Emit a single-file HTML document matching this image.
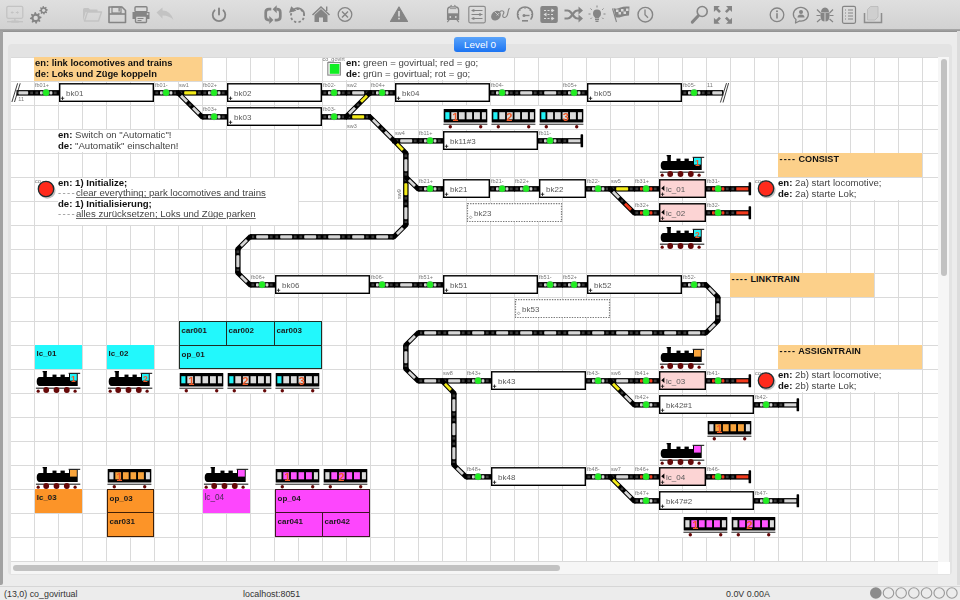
<!DOCTYPE html>
<html><head><meta charset="utf-8">
<style>
html,body{margin:0;padding:0;}
body{width:960px;height:600px;overflow:hidden;position:relative;background:#ececec;font-family:"Liberation Sans",sans-serif;}
.abs{position:absolute;}
#tb{left:0;top:0;width:960px;height:29px;background:linear-gradient(#dfdfdf,#d2d2d2);}
#tbl{left:0;top:29px;width:960px;height:3px;background:linear-gradient(#aaaaaa,#8f8f8f);}
#lbar{left:0;top:31px;width:3px;height:554px;background:#a2a2a2;border-bottom-right-radius:2px;}
#rbar{left:957px;top:31px;width:3px;height:554px;background:#dcdcdc;}
#panel{left:8px;top:44px;width:944px;height:531px;background:#e3e3e3;border-radius:4px;}
#grid{left:11px;top:57px;width:927px;height:505px;background-color:#fff;
  background-image:linear-gradient(90deg,#dadada 1px,transparent 1px),linear-gradient(#dadada 1px,transparent 1px);
  background-size:24px 24px;background-position:-1px 0px;}
#lvl{left:454px;top:37px;width:52px;height:15px;border-radius:3px;background:linear-gradient(#5aa4fb,#1c74f2);color:#fff;font-size:9.9px;line-height:15px;text-align:center;}
#vs{left:938px;top:57px;width:11px;height:505px;background:#f6f6f6;}
#vsth{left:941px;top:59px;width:6px;height:217px;border-radius:3px;background:#c2c2c2;}
#hs{left:11px;top:562px;width:927px;height:12px;background:#f6f6f6;}
#hsth{left:13px;top:565px;width:547px;height:6px;border-radius:3px;background:#c2c2c2;}
#corner{left:938px;top:562px;width:12px;height:12px;background:#fff;}
#sep{left:0;top:586px;width:960px;height:1px;background:#d6d6d6;}
.st{position:absolute;top:588px;font-size:8.9px;color:#333;line-height:12px;white-space:nowrap;}
svg{position:absolute;left:0;top:0;will-change:transform;}
.lb{font-size:5.5px;fill:#777;}
.bt{font-size:8px;fill:#5a5a5a;}
.num{font-size:8.5px;fill:#f05a28;font-weight:bold;}
.num2{font-size:11px;fill:#f05a28;font-weight:bold;}
.tx{position:absolute;font-size:9.6px;line-height:10.5px;color:#444;white-space:nowrap;}
.tx b{color:#111;}
.hd{color:#111;font-weight:bold;font-size:9.1px;}
.ob{position:absolute;background:#fcd08a;}
.dd{color:#888;letter-spacing:1.3px;}
u{text-decoration-color:#666;}
.dd2{letter-spacing:1.1px;}
.cb{position:absolute;box-sizing:border-box;font-size:8px;font-weight:bold;color:#1a1a1a;padding:2.5px 0 0 1.5px;line-height:12px;}
.cb.reg{font-weight:normal;color:#4a2a55;font-size:8.2px;}
</style></head><body>
<div id="tb" class="abs"></div>
<div id="tbl" class="abs"></div>
<div id="lbar" class="abs"></div>
<div id="rbar" class="abs"></div>
<div id="panel" class="abs"></div>
<div id="grid" class="abs"></div>
<div id="vs" class="abs"></div><div id="vsth" class="abs"></div>
<div id="hs" class="abs"></div><div id="hsth" class="abs"></div>
<div id="corner" class="abs"></div>
<div id="lvl" class="abs">Level 0</div>
<div id="sep" class="abs"></div>
<div class="st" style="left:4px">(13,0) co_govirtual</div>
<div class="st" style="left:243px">localhost:8051</div>
<div class="st" style="left:726px">0.0V 0.00A</div>
<svg width="960" height="600" viewBox="0 0 960 600">
<g fill="none" stroke="#c3c3c3" stroke-width="1.3"><rect x="6.8" y="6.3" width="16" height="12" rx="1.5"/></g>
<path d="M10.5,12.5 l2,-1.6 v1 h1.2 v1.2 h-1.2 v1 Z M19,12.5 l-2,-1.6 v1 h-1.2 v1.2 h1.2 v1 Z" fill="#c3c3c3"/>
<rect x="14.2" y="18.5" width="1.4" height="2.5" fill="#c3c3c3"/><rect x="7" y="21" width="16" height="1.4" fill="#c3c3c3"/><rect x="11" y="20.4" width="8" height="2.4" rx="1" fill="#c3c3c3"/>
<path d="M41.39,16.77 L41.50,17.90 L39.80,18.71 L39.56,19.50 L40.52,21.12 L39.80,22.00 L38.02,21.37 L37.30,21.76 L36.83,23.59 L35.70,23.70 L34.89,22.00 L34.10,21.76 L32.48,22.72 L31.60,22.00 L32.23,20.22 L31.84,19.50 L30.01,19.03 L29.90,17.90 L31.60,17.09 L31.84,16.30 L30.88,14.68 L31.60,13.80 L33.38,14.43 L34.10,14.04 L34.57,12.21 L35.70,12.10 L36.51,13.80 L37.30,14.04 L38.92,13.08 L39.80,13.80 L39.17,15.58 L39.56,16.30 Z" fill="#858585"/><circle cx="35.7" cy="17.9" r="2.2" fill="#dadada"/>
<path d="M47.82,9.46 L47.90,10.30 L46.64,10.90 L46.46,11.48 L47.18,12.69 L46.64,13.34 L45.32,12.87 L44.78,13.16 L44.44,14.52 L43.60,14.60 L43.00,13.34 L42.42,13.16 L41.21,13.88 L40.56,13.34 L41.03,12.02 L40.74,11.48 L39.38,11.14 L39.30,10.30 L40.56,9.70 L40.74,9.12 L40.02,7.91 L40.56,7.26 L41.88,7.73 L42.42,7.44 L42.76,6.08 L43.60,6.00 L44.20,7.26 L44.78,7.44 L45.99,6.72 L46.64,7.26 L46.17,8.58 L46.46,9.12 Z" fill="#858585"/><circle cx="43.6" cy="10.3" r="1.6" fill="#dadada"/>
<path d="M83,9.5 q0,-1.5 1.5,-1.5 h4 l1.5,1.5 h6.5 q1.2,0 1.2,1.2 v1.3 h-12 l-2.7,9 Z" fill="#c3c3c3"/>
<path d="M84.5,21 l3,-9 h14 l-3,9 Z" fill="none" stroke="#c3c3c3" stroke-width="1.4" stroke-linejoin="round"/>
<path d="M109,7 h13 l3.5,3.5 v12 h-16.5 Z" fill="none" stroke="#858585" stroke-width="1.6" stroke-linejoin="round"/>
<path d="M109,14 h16.5" stroke="#858585" stroke-width="1.6"/><rect x="112" y="7" width="9" height="6" fill="none" stroke="#858585" stroke-width="1.2"/><rect x="118.5" y="8" width="1.3" height="3.5" fill="#858585"/>
<rect x="135" y="6.8" width="12" height="5" rx="1" fill="none" stroke="#858585" stroke-width="1.4"/>
<path d="M132.5,12 h17 v7 h-2.7 v-3 h-11.6 v3 h-2.7 Z" fill="#858585"/>
<rect x="135.5" y="16" width="11" height="6.5" rx="1" fill="none" stroke="#858585" stroke-width="1.4"/>
<rect x="137.5" y="18" width="6" height="1" fill="#858585"/><rect x="137.5" y="20" width="4" height="1" fill="#858585"/><rect x="146.8" y="13.2" width="1.6" height="1.6" fill="#dadada"/>
<path d="M156.5,12.5 l6,-5 v3 q8,0 11,9.5 q-4,-4.5 -11,-4.5 v3.2 Z" fill="#c3c3c3"/>
<path d="M214.6,10.3 A6.3,6.3 0 1 0 223.4,10.3" fill="none" stroke="#858585" stroke-width="1.8" stroke-linecap="round"/>
<path d="M219,8.5 v6" stroke="#858585" stroke-width="1.9" stroke-linecap="round"/>
<path d="M271.3,9.2 h-2.3 q-3.3,0 -3.3,3.3 v4.3 q0,3.3 3.3,3.3 h0.6" fill="none" stroke="#858585" stroke-width="2.7"/>
<path d="M269.3,16 l4.1,4 l-4.1,4 Z" fill="#858585"/>
<path d="M274.7,20.1 h2.3 q3.3,0 3.3,-3.3 v-4.3 q0,-3.3 -3.3,-3.3 h-0.6" fill="none" stroke="#858585" stroke-width="2.7"/>
<path d="M276.7,5.2 l-4.1,4 l4.1,4 Z" fill="#858585"/>
<circle cx="297.5" cy="15.6" r="6.6" fill="none" stroke="#858585" stroke-width="1.8" stroke-dasharray="2.4 2.2" transform="rotate(20 297.5 15.6)"/>
<path d="M293.5,9.6 A6.6,6.6 0 0 1 304.1,15.6" fill="none" stroke="#858585" stroke-width="1.8"/>
<path d="M289,12.8 l2.2,-6.6 l5.2,4.6 Z" fill="#858585"/>
<path d="M312.5,15 l8.5,-8 l8.5,8" fill="none" stroke="#858585" stroke-width="1.6" stroke-linejoin="miter"/>
<path d="M314.5,15 l6.5,-6 l6.5,6 v7 h-4.5 v-4.5 h-4 v4.5 h-4.5 Z" fill="#858585"/>
<rect x="326" y="6.5" width="1.4" height="4.5" fill="#858585"/>
<circle cx="345" cy="14.5" r="6.8" fill="none" stroke="#858585" stroke-width="1.3"/>
<path d="M342,11.5 l6,6 M348,11.5 l-6,6" stroke="#858585" stroke-width="1.4"/>
<path d="M399,7 l8.5,14.5 h-17 Z" fill="#858585" stroke="#858585" stroke-width="1.2" stroke-linejoin="round"/>
<rect x="398.2" y="11" width="1.6" height="5.5" fill="#dcdcdc"/><rect x="398.2" y="17.8" width="1.6" height="1.6" fill="#dcdcdc"/>
<path d="M447.6,10 q0,-3 3,-3.2 h5 q3,0.2 3,3.2 v9.3 h-11 Z" fill="none" stroke="#858585" stroke-width="1.3"/>
<rect x="447.6" y="13.3" width="11" height="6" fill="#858585"/>
<circle cx="450.3" cy="17" r="0.9" fill="#d8d8d8"/><circle cx="455.8" cy="17" r="0.9" fill="#d8d8d8"/>
<path d="M449.5,19.3 l-2.2,2.8 M456.6,19.3 l2.2,2.8 M450.5,6.5 l1,-1.5 M455.5,6.5 l-1,-1.5" stroke="#858585" stroke-width="1.1"/>
<path d="M449.8,8.6 h6.5" stroke="#858585" stroke-width="0.8"/>
<rect x="468.8" y="6.3" width="16.5" height="16.5" rx="1.5" fill="none" stroke="#858585" stroke-width="1.2" opacity="0.9"/>
<path d="M471.5,10.5 h11 M471.5,14.5 h11 M471.5,18.5 h11" stroke="#858585" stroke-width="1.1"/>
<circle cx="473.5" cy="10.5" r="1.3" fill="#858585"/><circle cx="480" cy="14.5" r="1.3" fill="#858585"/><circle cx="473.5" cy="18.5" r="1.3" fill="#858585"/>
<ellipse cx="496" cy="15.6" rx="4.3" ry="5.4" transform="rotate(45 496 15.6)" fill="#858585"/>
<path d="M494.5,11.5 l4,4 M499.2,13 l-2.5,2.5" fill="none" stroke="#d8d8d8" stroke-width="0.8"/>
<path d="M499.5,12 C502.5,9.5 505,11.5 503.2,14.2 C501.5,17 504.8,19 506.8,16 C508.5,13.5 507.5,10 509.5,8.2" fill="none" stroke="#858585" stroke-width="1.1"/>
<path d="M519,19 A7.5,7.5 0 1 1 531,19" fill="none" stroke="#858585" stroke-width="1.6" stroke-linecap="round"/>
<path d="M523.5,15.5 h6" stroke="#858585" stroke-width="1.4"/><circle cx="524" cy="15.5" r="1.5" fill="#858585"/><rect x="522" y="20" width="6" height="1.6" fill="#858585"/>
<path d="M525,7.5 v1.5 M519.5,10 l1,1 M530.5,10 l-1,1 M517.5,14.5 h1.5 M531,14.5 h1.5" stroke="#858585" stroke-width="0.9"/>
<rect x="540.3" y="6" width="17.5" height="17" rx="2" fill="#858585"/>
<path d="M544,10.5 h10 M544,14.5 h10 M544,18.5 h10" stroke="#dcdcdc" stroke-width="1.2" stroke-dasharray="2 1.5"/>
<path d="M551.5,8.5 l3,2 l-3,2 Z M546.5,12.5 l-3,2 l3,2 Z M551.5,16.5 l3,2 l-3,2 Z" fill="#dcdcdc"/>
<path d="M564.5,10.5 h3 q2,0 3.5,2 l3,4 q1.5,2 3.5,2 h2" fill="none" stroke="#858585" stroke-width="2.2"/>
<path d="M564.5,18.5 h3 q2,0 3.5,-2 l3,-4 q1.5,-2 3.5,-2 h2" fill="none" stroke="#858585" stroke-width="2.2"/>
<path d="M578.5,6.5 l4.5,4 l-4.5,4 Z M578.5,14.5 l4.5,4 l-4.5,4 Z" fill="#858585"/>
<circle cx="597" cy="13.5" r="4" fill="#858585"/><path d="M594.5,15.5 h5 l-0.5,3 h-4 Z" fill="#858585"/><rect x="595" y="19" width="4" height="1.2" fill="#858585"/><rect x="595.5" y="20.8" width="3" height="1.2" fill="#858585"/>
<path d="M597,5.5 v2 M590.5,8.5 l1.3,1.3 M603.5,8.5 l-1.3,1.3 M588.5,14 h2 M603.5,14 h2 M590.5,19 l1.3,-1.3 M603.5,19 l-1.3,-1.3" stroke="#858585" stroke-width="1"/>
<path d="M612.5,8.5 l4,13.5" stroke="#858585" stroke-width="1.1"/>
<path d="M613.5,8 q3,1.5 7,-0.5 q3,-1.5 9,-1 l-0.5,9 q-5,0 -8,1.5 q-3,1 -5.5,0 Z" fill="#858585"/>
<path d="M616,9.5 h2.5 v2.5 h-2.5 Z M621,9 h2.5 v2.5 h-2.5 Z M626,8.5 h2.5 v2.5 h-2.5 Z M618.5,12 h2.5 v2.5 h-2.5 Z M623.5,11.5 h2.5 v2.5 h-2.5 Z" fill="#dadada"/>
<circle cx="645.3" cy="14.7" r="7.3" fill="none" stroke="#858585" stroke-width="1.4"/>
<path d="M645,9.5 v5.3 l3,3" fill="none" stroke="#858585" stroke-width="1.3"/>
<circle cx="702.2" cy="11.5" r="5" fill="none" stroke="#858585" stroke-width="1.6"/><path d="M698.3,15.8 l-6,6.3" stroke="#858585" stroke-width="3" stroke-linecap="round"/>
<path d="M713.9,6 h6 l-6,6 Z M732,6 h-6 l6,6 Z M713.9,23.8 h6 l-6,-6 Z M732,23.8 h-6 l6,-6 Z" fill="#858585"/>
<path d="M715,7.2 l5,5 M730.9,7.2 l-5,5 M715,22.6 l5,-5 M730.9,22.6 l-5,-5" stroke="#858585" stroke-width="2.6"/>
<circle cx="777" cy="14.8" r="6.8" fill="none" stroke="#858585" stroke-width="1.3"/><circle cx="777" cy="11.2" r="1" fill="#858585"/><rect x="776.2" y="13.2" width="1.6" height="5.3" fill="#858585"/>
<path d="M796,19.5 A7.5,6.8 0 1 1 799.5,21 l-4,2 Z" fill="none" stroke="#858585" stroke-width="1.3" stroke-linejoin="round"/>
<circle cx="801" cy="12" r="2" fill="#858585"/><path d="M797.5,17.5 q0,-3 3.5,-3 q3.5,0 3.5,3 Z" fill="#858585"/>
<path d="M820.5,13 h9 v3 q0,5.5 -4.5,5.5 q-4.5,0 -4.5,-5.5 Z" fill="#858585"/><path d="M821,12.5 q0,-4.5 4,-5 q4,0.5 4,5 Z" fill="#858585"/>
<path d="M825,13 v9" stroke="#dadada" stroke-width="0.9"/><path d="M817,9.5 l3.5,3.5 M833,9.5 l-3.5,3.5 M816.5,15.5 h4 M833.5,15.5 h-4 M817,22 l3.5,-3 M833,22 l-3.5,-3" stroke="#858585" stroke-width="1.2"/>
<rect x="842.5" y="6.3" width="13" height="17" rx="1.5" fill="none" stroke="#858585" stroke-width="1.2"/>
<path d="M845,10 h1 M848,10 h5 M845,13 h1 M848,13 h5 M845,16 h1 M848,16 h5 M845,19 h1 M848,19 h5" stroke="#858585" stroke-width="1.2"/>
<path d="M864.5,13 v9.5 h17 v-9.5" fill="none" stroke="#858585" stroke-width="1.5" opacity="0.9"/>
<path d="M867.5,20 v-10.5 l3,-3 h7.5 v10.5 l-3,3 Z" fill="#cfcfcf" stroke="#b8b8b8" stroke-width="0.8"/>
<rect x="16.5" y="90.1" width="17.5" height="5.5" fill="#000"/>
<rect x="18.4" y="91.3" width="9.8" height="3.1" rx="0.7" fill="#d6d6d6"/>
<rect x="30.2" y="91.55" width="2.8" height="2.6" fill="#3c3c3c"/>
<path d="M11.9,102 L17.6,83.3 M14.5,102 L20.2,83.3" stroke="#2a2a2a" stroke-width="0.9"/>
<text x="18.3" y="101" class="lb">11</text>
<rect x="34" y="90.1" width="25" height="5.5" fill="#000"/>
<rect x="35.4" y="91.55" width="2.8" height="2.6" fill="#3c3c3c"/>
<rect x="53.8" y="91.55" width="2.8" height="2.6" fill="#3c3c3c"/>
<rect x="40" y="91.15" width="2.8" height="3.4" rx="0.8" fill="#d6d6d6"/>
<rect x="49.6" y="91.15" width="2.8" height="3.4" rx="0.8" fill="#d6d6d6"/>
<circle cx="46.1" cy="92.65" r="3.35" fill="#20ee20" stroke="#7a5a9a" stroke-width="0.25"/>
<text x="35" y="86.9" class="lb">fb01+</text>
<rect x="59.7" y="83.8" width="93.6" height="17.5" fill="#fff" stroke="#000" stroke-width="1.4"/>
<text x="66" y="96" class="bt">bk01</text>
<path d="M62.5,96.5 v3.5 M60.75,98.25 h3.5" stroke="#111" stroke-width="0.8"/>
<rect x="154" y="90.1" width="25" height="5.5" fill="#000"/>
<rect x="155.4" y="91.55" width="2.8" height="2.6" fill="#3c3c3c"/>
<rect x="173.8" y="91.55" width="2.8" height="2.6" fill="#3c3c3c"/>
<rect x="160" y="91.15" width="2.8" height="3.4" rx="0.8" fill="#d6d6d6"/>
<rect x="169.6" y="91.15" width="2.8" height="3.4" rx="0.8" fill="#d6d6d6"/>
<circle cx="166.1" cy="92.65" r="3.35" fill="#20ee20" stroke="#7a5a9a" stroke-width="0.25"/>
<text x="155" y="86.9" class="lb">fb01-</text>
<rect x="178" y="90.1" width="25" height="5.5" fill="#000"/>
<rect x="179.4" y="91.55" width="2.8" height="2.6" fill="#3c3c3c"/>
<rect x="197.8" y="91.55" width="2.8" height="2.6" fill="#3c3c3c"/>
<rect x="184.2" y="91.3" width="12" height="3.1" rx="0.7" fill="#f4ec1a"/>
<text x="179" y="86.9" class="lb">sw1</text>
<path d="M176,92.85 L178,92.85 L202,116.85 L204,116.85" fill="none" stroke="#000" stroke-width="4.9" stroke-linejoin="miter" stroke-miterlimit="3"/>
<line x1="180.99" y1="95.84" x2="187.01" y2="101.86" stroke="#d6d6d6" stroke-width="2.8"/>
<line x1="189.08" y1="103.93" x2="190.92" y2="105.77" stroke="#3c3c3c" stroke-width="2.4"/>
<line x1="192.99" y1="107.84" x2="199.01" y2="113.86" stroke="#d6d6d6" stroke-width="2.8"/>
<rect x="202" y="90.1" width="25" height="5.5" fill="#000"/>
<rect x="203.4" y="91.55" width="2.8" height="2.6" fill="#3c3c3c"/>
<rect x="221.8" y="91.55" width="2.8" height="2.6" fill="#3c3c3c"/>
<rect x="208" y="91.15" width="2.8" height="3.4" rx="0.8" fill="#d6d6d6"/>
<rect x="217.6" y="91.15" width="2.8" height="3.4" rx="0.8" fill="#d6d6d6"/>
<circle cx="214.1" cy="92.65" r="3.35" fill="#20ee20" stroke="#7a5a9a" stroke-width="0.25"/>
<text x="203" y="86.9" class="lb">fb02+</text>
<rect x="227.7" y="83.8" width="93.6" height="17.5" fill="#fff" stroke="#000" stroke-width="1.4"/>
<text x="234" y="96" class="bt">bk02</text>
<path d="M230.5,96.5 v3.5 M228.75,98.25 h3.5" stroke="#111" stroke-width="0.8"/>
<rect x="322" y="90.1" width="25" height="5.5" fill="#000"/>
<rect x="323.4" y="91.55" width="2.8" height="2.6" fill="#3c3c3c"/>
<rect x="341.8" y="91.55" width="2.8" height="2.6" fill="#3c3c3c"/>
<rect x="328" y="91.15" width="2.8" height="3.4" rx="0.8" fill="#d6d6d6"/>
<rect x="337.6" y="91.15" width="2.8" height="3.4" rx="0.8" fill="#d6d6d6"/>
<circle cx="334.1" cy="92.65" r="3.35" fill="#20ee20" stroke="#7a5a9a" stroke-width="0.25"/>
<text x="323" y="86.9" class="lb">fb02-</text>
<rect x="346" y="90.1" width="25" height="5.5" fill="#000"/>
<rect x="347.4" y="91.55" width="2.8" height="2.6" fill="#3c3c3c"/>
<rect x="365.8" y="91.55" width="2.8" height="2.6" fill="#3c3c3c"/>
<rect x="352.2" y="91.3" width="12" height="3.1" rx="0.7" fill="#d6d6d6"/>
<text x="347" y="86.9" class="lb">sw2</text>
<rect x="370" y="90.1" width="25" height="5.5" fill="#000"/>
<rect x="371.4" y="91.55" width="2.8" height="2.6" fill="#3c3c3c"/>
<rect x="389.8" y="91.55" width="2.8" height="2.6" fill="#3c3c3c"/>
<rect x="376" y="91.15" width="2.8" height="3.4" rx="0.8" fill="#d6d6d6"/>
<rect x="385.6" y="91.15" width="2.8" height="3.4" rx="0.8" fill="#d6d6d6"/>
<circle cx="382.1" cy="92.65" r="3.35" fill="#20ee20" stroke="#7a5a9a" stroke-width="0.25"/>
<text x="371" y="86.9" class="lb">fb04+</text>
<rect x="395.7" y="83.8" width="93.6" height="17.5" fill="#fff" stroke="#000" stroke-width="1.4"/>
<text x="402" y="96" class="bt">bk04</text>
<path d="M398.5,96.5 v3.5 M396.75,98.25 h3.5" stroke="#111" stroke-width="0.8"/>
<rect x="490" y="90.1" width="25" height="5.5" fill="#000"/>
<rect x="491.4" y="91.55" width="2.8" height="2.6" fill="#3c3c3c"/>
<rect x="509.8" y="91.55" width="2.8" height="2.6" fill="#3c3c3c"/>
<rect x="496" y="91.15" width="2.8" height="3.4" rx="0.8" fill="#d6d6d6"/>
<rect x="505.6" y="91.15" width="2.8" height="3.4" rx="0.8" fill="#d6d6d6"/>
<circle cx="502.1" cy="92.65" r="3.35" fill="#20ee20" stroke="#7a5a9a" stroke-width="0.25"/>
<text x="491" y="86.9" class="lb">fb04-</text>
<rect x="514" y="90.1" width="25" height="5.5" fill="#000"/>
<rect x="515.4" y="91.55" width="2.8" height="2.6" fill="#3c3c3c"/>
<rect x="533.8" y="91.55" width="2.8" height="2.6" fill="#3c3c3c"/>
<rect x="520.2" y="91.3" width="12" height="3.1" rx="0.7" fill="#d6d6d6"/>
<rect x="538" y="90.1" width="25" height="5.5" fill="#000"/>
<rect x="539.4" y="91.55" width="2.8" height="2.6" fill="#3c3c3c"/>
<rect x="557.8" y="91.55" width="2.8" height="2.6" fill="#3c3c3c"/>
<rect x="544.2" y="91.3" width="12" height="3.1" rx="0.7" fill="#d6d6d6"/>
<rect x="562" y="90.1" width="25" height="5.5" fill="#000"/>
<rect x="563.4" y="91.55" width="2.8" height="2.6" fill="#3c3c3c"/>
<rect x="581.8" y="91.55" width="2.8" height="2.6" fill="#3c3c3c"/>
<rect x="568" y="91.15" width="2.8" height="3.4" rx="0.8" fill="#d6d6d6"/>
<rect x="577.6" y="91.15" width="2.8" height="3.4" rx="0.8" fill="#d6d6d6"/>
<circle cx="574.1" cy="92.65" r="3.35" fill="#20ee20" stroke="#7a5a9a" stroke-width="0.25"/>
<text x="563" y="86.9" class="lb">fb05+</text>
<rect x="587.7" y="83.8" width="93.6" height="17.5" fill="#fff" stroke="#000" stroke-width="1.4"/>
<text x="594" y="96" class="bt">bk05</text>
<path d="M590.5,96.5 v3.5 M588.75,98.25 h3.5" stroke="#111" stroke-width="0.8"/>
<rect x="682" y="90.1" width="25" height="5.5" fill="#000"/>
<rect x="683.4" y="91.55" width="2.8" height="2.6" fill="#3c3c3c"/>
<rect x="701.8" y="91.55" width="2.8" height="2.6" fill="#3c3c3c"/>
<rect x="688" y="91.15" width="2.8" height="3.4" rx="0.8" fill="#d6d6d6"/>
<rect x="697.6" y="91.15" width="2.8" height="3.4" rx="0.8" fill="#d6d6d6"/>
<circle cx="694.1" cy="92.65" r="3.35" fill="#20ee20" stroke="#7a5a9a" stroke-width="0.25"/>
<text x="683" y="86.9" class="lb">fb05-</text>
<rect x="706" y="90.1" width="17.3" height="5.5" fill="#000"/>
<rect x="707.3" y="91.55" width="2.8" height="2.6" fill="#3c3c3c"/>
<rect x="712.3" y="91.3" width="9.8" height="3.1" rx="0.7" fill="#d6d6d6"/>
<path d="M720.4,102.5 L726.5,83.1 M723,102.5 L728.6,83.1" stroke="#2a2a2a" stroke-width="0.9"/>
<text x="707" y="86.9" class="lb">11</text>
<rect x="202" y="114.1" width="25" height="5.5" fill="#000"/>
<rect x="203.4" y="115.55" width="2.8" height="2.6" fill="#3c3c3c"/>
<rect x="221.8" y="115.55" width="2.8" height="2.6" fill="#3c3c3c"/>
<rect x="208" y="115.15" width="2.8" height="3.4" rx="0.8" fill="#d6d6d6"/>
<rect x="217.6" y="115.15" width="2.8" height="3.4" rx="0.8" fill="#d6d6d6"/>
<circle cx="214.1" cy="116.65" r="3.35" fill="#20ee20" stroke="#7a5a9a" stroke-width="0.25"/>
<text x="203" y="110.9" class="lb">fb03+</text>
<rect x="227.7" y="107.8" width="93.6" height="17.5" fill="#fff" stroke="#000" stroke-width="1.4"/>
<text x="234" y="120" class="bt">bk03</text>
<path d="M230.5,120.5 v3.5 M228.75,122.25 h3.5" stroke="#111" stroke-width="0.8"/>
<rect x="322" y="114.1" width="25" height="5.5" fill="#000"/>
<rect x="323.4" y="115.55" width="2.8" height="2.6" fill="#3c3c3c"/>
<rect x="341.8" y="115.55" width="2.8" height="2.6" fill="#3c3c3c"/>
<rect x="328" y="115.15" width="2.8" height="3.4" rx="0.8" fill="#d6d6d6"/>
<rect x="337.6" y="115.15" width="2.8" height="3.4" rx="0.8" fill="#d6d6d6"/>
<circle cx="334.1" cy="116.65" r="3.35" fill="#20ee20" stroke="#7a5a9a" stroke-width="0.25"/>
<text x="323" y="110.9" class="lb">fb03-</text>
<rect x="346" y="114.1" width="25" height="5.5" fill="#000"/>
<rect x="347.4" y="115.55" width="2.8" height="2.6" fill="#3c3c3c"/>
<rect x="365.8" y="115.55" width="2.8" height="2.6" fill="#3c3c3c"/>
<rect x="352.2" y="115.3" width="12" height="3.1" rx="0.7" fill="#f4ec1a"/>
<text x="347" y="127.5" class="lb">sw3</text>
<path d="M372,92.85 L370,92.85 L346,116.85 L344,116.85" fill="none" stroke="#000" stroke-width="4.9" stroke-linejoin="miter" stroke-miterlimit="3"/>
<line x1="367.01" y1="95.84" x2="360.99" y2="101.86" stroke="#f4ec1a" stroke-width="2.8"/>
<line x1="358.92" y1="103.93" x2="357.08" y2="105.77" stroke="#3c3c3c" stroke-width="2.4"/>
<line x1="355.01" y1="107.84" x2="348.99" y2="113.86" stroke="#d6d6d6" stroke-width="2.8"/>
<rect x="442" y="106" width="47" height="23" fill="#fff"/>
<g transform="translate(443.7,109)"><rect x="0" y="0" width="43.6" height="13.6" rx="0.6" fill="#000"/><rect x="-0.3" y="14.7" width="44" height="1.1" fill="#3a3a3a"/><rect x="1.6" y="3.2" width="4.2" height="7.1" fill="#22f2f6"/><rect x="7.6" y="3.2" width="5.8" height="7.1" fill="#dcdcdc"/><rect x="15.2" y="3.2" width="5.8" height="7.1" fill="#dcdcdc"/><rect x="22.8" y="3.2" width="5.6" height="7.1" fill="#dcdcdc"/><rect x="30.3" y="3.2" width="5.9" height="7.1" fill="#dcdcdc"/><rect x="38.2" y="3.2" width="4" height="7.1" fill="#dcdcdc"/><circle cx="6.6" cy="17.8" r="1.7" fill="#650808"/><circle cx="37" cy="17.8" r="1.7" fill="#650808"/></g>
<text x="455.2" y="120.6" class="num2" text-anchor="middle">1</text>
<rect x="490" y="106" width="47" height="23" fill="#fff"/>
<g transform="translate(491.7,109)"><rect x="0" y="0" width="43.6" height="13.6" rx="0.6" fill="#000"/><rect x="-0.3" y="14.7" width="44" height="1.1" fill="#3a3a3a"/><rect x="1.6" y="3.2" width="4.2" height="7.1" fill="#22f2f6"/><rect x="7.6" y="3.2" width="5.8" height="7.1" fill="#dcdcdc"/><rect x="15.2" y="3.2" width="5.8" height="7.1" fill="#dcdcdc"/><rect x="22.8" y="3.2" width="5.6" height="7.1" fill="#dcdcdc"/><rect x="30.3" y="3.2" width="5.9" height="7.1" fill="#dcdcdc"/><rect x="38.2" y="3.2" width="4" height="7.1" fill="#dcdcdc"/><circle cx="6.6" cy="17.8" r="1.7" fill="#650808"/><circle cx="37" cy="17.8" r="1.7" fill="#650808"/></g>
<text x="509.2" y="120.6" class="num2" text-anchor="middle">2</text>
<rect x="538" y="106" width="47" height="23" fill="#fff"/>
<g transform="translate(539.7,109)"><rect x="0" y="0" width="43.6" height="13.6" rx="0.6" fill="#000"/><rect x="-0.3" y="14.7" width="44" height="1.1" fill="#3a3a3a"/><rect x="1.6" y="3.2" width="4.2" height="7.1" fill="#22f2f6"/><rect x="7.6" y="3.2" width="5.8" height="7.1" fill="#dcdcdc"/><rect x="15.2" y="3.2" width="5.8" height="7.1" fill="#dcdcdc"/><rect x="22.8" y="3.2" width="5.6" height="7.1" fill="#dcdcdc"/><rect x="30.3" y="3.2" width="5.9" height="7.1" fill="#dcdcdc"/><rect x="38.2" y="3.2" width="4" height="7.1" fill="#dcdcdc"/><circle cx="6.6" cy="17.8" r="1.7" fill="#650808"/><circle cx="37" cy="17.8" r="1.7" fill="#650808"/></g>
<text x="565.7" y="120.6" class="num2" text-anchor="middle">3</text>
<rect x="394" y="138.1" width="25" height="5.5" fill="#000"/>
<rect x="395.4" y="139.55" width="2.8" height="2.6" fill="#3c3c3c"/>
<rect x="413.8" y="139.55" width="2.8" height="2.6" fill="#3c3c3c"/>
<rect x="400.2" y="139.3" width="12" height="3.1" rx="0.7" fill="#d6d6d6"/>
<text x="395" y="134.9" class="lb">sw4</text>
<rect x="418" y="138.1" width="25" height="5.5" fill="#000"/>
<rect x="419.4" y="139.55" width="2.8" height="2.6" fill="#3c3c3c"/>
<rect x="437.8" y="139.55" width="2.8" height="2.6" fill="#3c3c3c"/>
<rect x="424" y="139.15" width="2.8" height="3.4" rx="0.8" fill="#d6d6d6"/>
<rect x="433.6" y="139.15" width="2.8" height="3.4" rx="0.8" fill="#d6d6d6"/>
<circle cx="430.1" cy="140.65" r="3.35" fill="#20ee20" stroke="#7a5a9a" stroke-width="0.25"/>
<text x="419" y="134.9" class="lb">fb11+</text>
<rect x="443.7" y="131.8" width="93.6" height="17.5" fill="#fff" stroke="#000" stroke-width="1.4"/>
<text x="450" y="144" class="bt">bk11#3</text>
<path d="M446.5,144.5 v3.5 M444.75,146.25 h3.5" stroke="#111" stroke-width="0.8"/>
<rect x="538" y="138.1" width="25" height="5.5" fill="#000"/>
<rect x="539.4" y="139.55" width="2.8" height="2.6" fill="#3c3c3c"/>
<rect x="557.8" y="139.55" width="2.8" height="2.6" fill="#3c3c3c"/>
<rect x="544" y="139.15" width="2.8" height="3.4" rx="0.8" fill="#d6d6d6"/>
<rect x="553.6" y="139.15" width="2.8" height="3.4" rx="0.8" fill="#d6d6d6"/>
<circle cx="550.1" cy="140.65" r="3.35" fill="#20ee20" stroke="#7a5a9a" stroke-width="0.25"/>
<text x="539" y="134.9" class="lb">fb11-</text>
<rect x="562" y="138.1" width="19.5" height="5.5" fill="#000"/>
<rect x="563.4" y="139.55" width="2.8" height="2.6" fill="#3c3c3c"/>
<rect x="568.3" y="139.3" width="12.2" height="3.1" fill="#d6d6d6"/>
<rect x="580.6" y="134.35" width="2.5" height="13" rx="0.6" fill="#000"/>
<path d="M368,116.85 L370,116.85 L394,140.85 L396,140.85" fill="none" stroke="#000" stroke-width="4.9" stroke-linejoin="miter" stroke-miterlimit="3"/>
<line x1="372.99" y1="119.84" x2="379.01" y2="125.86" stroke="#d6d6d6" stroke-width="2.8"/>
<line x1="381.08" y1="127.93" x2="382.92" y2="129.77" stroke="#3c3c3c" stroke-width="2.4"/>
<line x1="384.99" y1="131.84" x2="391.01" y2="137.86" stroke="#d6d6d6" stroke-width="2.8"/>
<path d="M392,140.85 L394,140.85 L405.85,153 L405.85,155" fill="none" stroke="#000" stroke-width="4.9" stroke-linejoin="miter" stroke-miterlimit="3"/>
<line x1="396.96" y1="143.88" x2="402.89" y2="149.97" stroke="#f4ec1a" stroke-width="2.8"/>
<rect x="403.1" y="153" width="5.5" height="72" fill="#000"/>
<rect x="404.55" y="154.4" width="2.6" height="2.8" fill="#3c3c3c"/>
<rect x="404.55" y="172.8" width="2.6" height="2.8" fill="#3c3c3c"/>
<rect x="404.3" y="159.2" width="3.1" height="12" rx="0.7" fill="#d6d6d6"/>
<rect x="404.55" y="178.4" width="2.6" height="2.8" fill="#3c3c3c"/>
<rect x="404.55" y="196.8" width="2.6" height="2.8" fill="#3c3c3c"/>
<rect x="404.3" y="183.2" width="3.1" height="12" rx="0.7" fill="#f4ec1a"/>
<rect x="404.55" y="202.4" width="2.6" height="2.8" fill="#3c3c3c"/>
<rect x="404.55" y="220.8" width="2.6" height="2.8" fill="#3c3c3c"/>
<rect x="404.3" y="207.2" width="3.1" height="12" rx="0.7" fill="#d6d6d6"/>
<path d="M405.85,223 L405.85,225 L394,236.85 L392,236.85" fill="none" stroke="#000" stroke-width="4.9" stroke-linejoin="miter" stroke-miterlimit="3"/>
<line x1="402.93" y1="227.92" x2="396.92" y2="233.93" stroke="#d6d6d6" stroke-width="2.8"/>
<rect x="250" y="234.1" width="144" height="5.5" fill="#000"/>
<rect x="251.4" y="235.55" width="2.8" height="2.6" fill="#3c3c3c"/>
<rect x="269.8" y="235.55" width="2.8" height="2.6" fill="#3c3c3c"/>
<rect x="256.2" y="235.3" width="12" height="3.1" rx="0.7" fill="#d6d6d6"/>
<rect x="275.4" y="235.55" width="2.8" height="2.6" fill="#3c3c3c"/>
<rect x="293.8" y="235.55" width="2.8" height="2.6" fill="#3c3c3c"/>
<rect x="280.2" y="235.3" width="12" height="3.1" rx="0.7" fill="#d6d6d6"/>
<rect x="299.4" y="235.55" width="2.8" height="2.6" fill="#3c3c3c"/>
<rect x="317.8" y="235.55" width="2.8" height="2.6" fill="#3c3c3c"/>
<rect x="304.2" y="235.3" width="12" height="3.1" rx="0.7" fill="#d6d6d6"/>
<rect x="323.4" y="235.55" width="2.8" height="2.6" fill="#3c3c3c"/>
<rect x="341.8" y="235.55" width="2.8" height="2.6" fill="#3c3c3c"/>
<rect x="328.2" y="235.3" width="12" height="3.1" rx="0.7" fill="#d6d6d6"/>
<rect x="347.4" y="235.55" width="2.8" height="2.6" fill="#3c3c3c"/>
<rect x="365.8" y="235.55" width="2.8" height="2.6" fill="#3c3c3c"/>
<rect x="352.2" y="235.3" width="12" height="3.1" rx="0.7" fill="#d6d6d6"/>
<rect x="371.4" y="235.55" width="2.8" height="2.6" fill="#3c3c3c"/>
<rect x="389.8" y="235.55" width="2.8" height="2.6" fill="#3c3c3c"/>
<rect x="376.2" y="235.3" width="12" height="3.1" rx="0.7" fill="#d6d6d6"/>
<path d="M252,236.85 L250,236.85 L237.85,249 L237.85,251" fill="none" stroke="#000" stroke-width="4.9" stroke-linejoin="miter" stroke-miterlimit="3"/>
<line x1="246.93" y1="239.92" x2="240.92" y2="245.93" stroke="#d6d6d6" stroke-width="2.8"/>
<rect x="235.1" y="249" width="5.5" height="24" fill="#000"/>
<rect x="236.55" y="250.4" width="2.6" height="2.8" fill="#3c3c3c"/>
<rect x="236.55" y="268.8" width="2.6" height="2.8" fill="#3c3c3c"/>
<rect x="236.3" y="255.2" width="3.1" height="12" rx="0.7" fill="#d6d6d6"/>
<path d="M237.85,271 L237.85,273 L250,284.85 L252,284.85" fill="none" stroke="#000" stroke-width="4.9" stroke-linejoin="miter" stroke-miterlimit="3"/>
<line x1="240.88" y1="275.96" x2="246.97" y2="281.89" stroke="#d6d6d6" stroke-width="2.8"/>
<text transform="translate(401.2,199) rotate(-90)" class="lb">sw9</text>
<path d="M405.85,177 L418,188.85 L420,188.85" fill="none" stroke="#000" stroke-width="4.9" stroke-linejoin="miter" stroke-miterlimit="3"/>
<line x1="408.88" y1="179.96" x2="414.97" y2="185.89" stroke="#d6d6d6" stroke-width="2.8"/>
<rect x="659" y="154" width="47" height="23" fill="#fff"/>
<g transform="translate(659,155)"><rect x="7.6" y="0" width="4.4" height="1.3" fill="#000"/><rect x="8.3" y="0" width="3.5" height="7" fill="#000"/><rect x="17.5" y="3.6" width="4" height="3" fill="#000"/><rect x="25.5" y="3.6" width="4.3" height="3" fill="#000"/><path d="M4.7,6 H41 V15 H4.7 A3,4.5 0 0 1 4.7,6 Z" fill="#000"/><rect x="34" y="2.2" width="8.7" height="12.8" fill="#000"/><rect x="33.6" y="1.8" width="11.6" height="1.1" fill="#222"/><rect x="35" y="3" width="6.8" height="6.6" fill="#22f2f6"/><rect x="0.9" y="16.6" width="44.4" height="1.2" fill="#333"/><circle cx="11.2" cy="19" r="2.9" fill="#650808"/><circle cx="21.5" cy="19" r="2.9" fill="#650808"/><circle cx="31.8" cy="19" r="2.9" fill="#650808"/><circle cx="3.2" cy="20.2" r="1.6" fill="#650808"/><circle cx="40.1" cy="20.2" r="1.6" fill="#650808"/></g>
<text x="697.3" y="166" class="num" text-anchor="middle">1</text>
<circle cx="47.3" cy="190.5" r="8.3" fill="#8a8a8a" opacity="0.55"/>
<circle cx="46" cy="189" r="7.7" fill="#ff2a1c" stroke="#1c2c30" stroke-width="1.3"/>
<text x="35" y="183" class="lb">co...</text>
<rect x="418" y="186.1" width="25" height="5.5" fill="#000"/>
<rect x="419.4" y="187.55" width="2.8" height="2.6" fill="#3c3c3c"/>
<rect x="437.8" y="187.55" width="2.8" height="2.6" fill="#3c3c3c"/>
<rect x="424" y="187.15" width="2.8" height="3.4" rx="0.8" fill="#d6d6d6"/>
<rect x="433.6" y="187.15" width="2.8" height="3.4" rx="0.8" fill="#d6d6d6"/>
<circle cx="430.1" cy="188.65" r="3.35" fill="#20ee20" stroke="#7a5a9a" stroke-width="0.25"/>
<text x="419" y="182.9" class="lb">fb21+</text>
<rect x="443.7" y="179.8" width="45.6" height="17.5" fill="#fff" stroke="#000" stroke-width="1.4"/>
<text x="450" y="192" class="bt">bk21</text>
<path d="M446.5,192.5 v3.5 M444.75,194.25 h3.5" stroke="#111" stroke-width="0.8"/>
<rect x="490" y="186.1" width="25" height="5.5" fill="#000"/>
<rect x="491.4" y="187.55" width="2.8" height="2.6" fill="#3c3c3c"/>
<rect x="509.8" y="187.55" width="2.8" height="2.6" fill="#3c3c3c"/>
<rect x="496" y="187.15" width="2.8" height="3.4" rx="0.8" fill="#d6d6d6"/>
<rect x="505.6" y="187.15" width="2.8" height="3.4" rx="0.8" fill="#d6d6d6"/>
<circle cx="502.1" cy="188.65" r="3.35" fill="#20ee20" stroke="#7a5a9a" stroke-width="0.25"/>
<text x="491" y="182.9" class="lb">fb21-</text>
<rect x="514" y="186.1" width="25" height="5.5" fill="#000"/>
<rect x="515.4" y="187.55" width="2.8" height="2.6" fill="#3c3c3c"/>
<rect x="533.8" y="187.55" width="2.8" height="2.6" fill="#3c3c3c"/>
<rect x="520" y="187.15" width="2.8" height="3.4" rx="0.8" fill="#d6d6d6"/>
<rect x="529.6" y="187.15" width="2.8" height="3.4" rx="0.8" fill="#d6d6d6"/>
<circle cx="526.1" cy="188.65" r="3.35" fill="#20ee20" stroke="#7a5a9a" stroke-width="0.25"/>
<text x="515" y="182.9" class="lb">fb22+</text>
<rect x="539.7" y="179.8" width="45.6" height="17.5" fill="#fff" stroke="#000" stroke-width="1.4"/>
<text x="546" y="192" class="bt">bk22</text>
<path d="M542.5,192.5 v3.5 M540.75,194.25 h3.5" stroke="#111" stroke-width="0.8"/>
<rect x="586" y="186.1" width="25" height="5.5" fill="#000"/>
<rect x="587.4" y="187.55" width="2.8" height="2.6" fill="#3c3c3c"/>
<rect x="605.8" y="187.55" width="2.8" height="2.6" fill="#3c3c3c"/>
<rect x="592" y="187.15" width="2.8" height="3.4" rx="0.8" fill="#d6d6d6"/>
<rect x="601.6" y="187.15" width="2.8" height="3.4" rx="0.8" fill="#d6d6d6"/>
<circle cx="598.1" cy="188.65" r="3.35" fill="#20ee20" stroke="#7a5a9a" stroke-width="0.25"/>
<text x="587" y="182.9" class="lb">fb22-</text>
<rect x="610" y="186.1" width="25" height="5.5" fill="#000"/>
<rect x="611.4" y="187.55" width="2.8" height="2.6" fill="#3c3c3c"/>
<rect x="629.8" y="187.55" width="2.8" height="2.6" fill="#3c3c3c"/>
<rect x="616.2" y="187.3" width="12" height="3.1" rx="0.7" fill="#f4ec1a"/>
<text x="611" y="182.9" class="lb">sw5</text>
<path d="M608,188.85 L610,188.85 L634,212.85 L636,212.85" fill="none" stroke="#000" stroke-width="4.9" stroke-linejoin="miter" stroke-miterlimit="3"/>
<line x1="612.99" y1="191.84" x2="619.01" y2="197.86" stroke="#d6d6d6" stroke-width="2.8"/>
<line x1="621.08" y1="199.93" x2="622.92" y2="201.77" stroke="#3c3c3c" stroke-width="2.4"/>
<line x1="624.99" y1="203.84" x2="631.01" y2="209.86" stroke="#f23a1c" stroke-width="2.8"/>
<rect x="634" y="186.1" width="25" height="5.5" fill="#000"/>
<rect x="635.4" y="187.55" width="2.8" height="2.6" fill="#3c3c3c"/>
<rect x="653.8" y="187.55" width="2.8" height="2.6" fill="#3c3c3c"/>
<rect x="640" y="187.15" width="2.8" height="3.4" rx="0.8" fill="#f23a1c"/>
<rect x="649.6" y="187.15" width="2.8" height="3.4" rx="0.8" fill="#f23a1c"/>
<circle cx="646.1" cy="188.65" r="3.35" fill="#20ee20" stroke="#7a5a9a" stroke-width="0.25"/>
<text x="635" y="182.9" class="lb">fb31+</text>
<rect x="659.7" y="179.8" width="45.6" height="17.5" fill="#fcd4d4" stroke="#000" stroke-width="1.4"/>
<path d="M661.2,188.3 L664.4,185.6 L664.4,191 Z" fill="#000"/>
<text x="666" y="192" class="bt">lc_01</text>
<path d="M662.5,192.5 v3.5 M660.75,194.25 h3.5" stroke="#111" stroke-width="0.8"/>
<rect x="706" y="186.1" width="25" height="5.5" fill="#000"/>
<rect x="707.4" y="187.55" width="2.8" height="2.6" fill="#3c3c3c"/>
<rect x="725.8" y="187.55" width="2.8" height="2.6" fill="#3c3c3c"/>
<rect x="712" y="187.15" width="2.8" height="3.4" rx="0.8" fill="#f23a1c"/>
<rect x="721.6" y="187.15" width="2.8" height="3.4" rx="0.8" fill="#f23a1c"/>
<circle cx="718.1" cy="188.65" r="3.35" fill="#20ee20" stroke="#7a5a9a" stroke-width="0.25"/>
<text x="707" y="182.9" class="lb">fb31-</text>
<rect x="730" y="186.1" width="19.5" height="5.5" fill="#000"/>
<rect x="731.4" y="187.55" width="2.8" height="2.6" fill="#3c3c3c"/>
<rect x="736.3" y="187.3" width="12.2" height="3.1" fill="#f23a1c"/>
<rect x="748.6" y="182.35" width="2.5" height="13" rx="0.6" fill="#000"/>
<circle cx="767.3" cy="190.0" r="8.3" fill="#8a8a8a" opacity="0.55"/>
<circle cx="766" cy="188.5" r="7.7" fill="#ff2a1c" stroke="#1c2c30" stroke-width="1.3"/>
<text x="755" y="183" class="lb">co...</text>
<rect x="467.5" y="203.6" width="94" height="17.9" fill="#fff" stroke="#7a7a7a" stroke-width="1.2" stroke-dasharray="1.4 1.2"/>
<text x="474" y="216" class="bt">bk23</text>
<rect x="469.6" y="216.4" width="2" height="2" fill="none" stroke="#777" stroke-width="0.6" transform="rotate(45 470.6 217.4)"/>
<rect x="634" y="210.1" width="25" height="5.5" fill="#000"/>
<rect x="635.4" y="211.55" width="2.8" height="2.6" fill="#3c3c3c"/>
<rect x="653.8" y="211.55" width="2.8" height="2.6" fill="#3c3c3c"/>
<rect x="640" y="211.15" width="2.8" height="3.4" rx="0.8" fill="#f23a1c"/>
<rect x="649.6" y="211.15" width="2.8" height="3.4" rx="0.8" fill="#f23a1c"/>
<circle cx="646.1" cy="212.65" r="3.35" fill="#20ee20" stroke="#7a5a9a" stroke-width="0.25"/>
<text x="635" y="206.9" class="lb">fb32+</text>
<rect x="659.7" y="203.8" width="45.6" height="17.5" fill="#fcd4d4" stroke="#000" stroke-width="1.4"/>
<path d="M661.2,212.3 L664.4,209.6 L664.4,215 Z" fill="#000"/>
<text x="666" y="216" class="bt">lc_02</text>
<path d="M662.5,216.5 v3.5 M660.75,218.25 h3.5" stroke="#111" stroke-width="0.8"/>
<rect x="706" y="210.1" width="25" height="5.5" fill="#000"/>
<rect x="707.4" y="211.55" width="2.8" height="2.6" fill="#3c3c3c"/>
<rect x="725.8" y="211.55" width="2.8" height="2.6" fill="#3c3c3c"/>
<rect x="712" y="211.15" width="2.8" height="3.4" rx="0.8" fill="#f23a1c"/>
<rect x="721.6" y="211.15" width="2.8" height="3.4" rx="0.8" fill="#f23a1c"/>
<circle cx="718.1" cy="212.65" r="3.35" fill="#20ee20" stroke="#7a5a9a" stroke-width="0.25"/>
<text x="707" y="206.9" class="lb">fb32-</text>
<rect x="730" y="210.1" width="19.5" height="5.5" fill="#000"/>
<rect x="731.4" y="211.55" width="2.8" height="2.6" fill="#3c3c3c"/>
<rect x="736.3" y="211.3" width="12.2" height="3.1" fill="#f23a1c"/>
<rect x="748.6" y="206.35" width="2.5" height="13" rx="0.6" fill="#000"/>
<rect x="659" y="226" width="47" height="23" fill="#fff"/>
<g transform="translate(659,227)"><rect x="7.6" y="0" width="4.4" height="1.3" fill="#000"/><rect x="8.3" y="0" width="3.5" height="7" fill="#000"/><rect x="17.5" y="3.6" width="4" height="3" fill="#000"/><rect x="25.5" y="3.6" width="4.3" height="3" fill="#000"/><path d="M4.7,6 H41 V15 H4.7 A3,4.5 0 0 1 4.7,6 Z" fill="#000"/><rect x="34" y="2.2" width="8.7" height="12.8" fill="#000"/><rect x="33.6" y="1.8" width="11.6" height="1.1" fill="#222"/><rect x="35" y="3" width="6.8" height="6.6" fill="#22f2f6"/><rect x="0.9" y="16.6" width="44.4" height="1.2" fill="#333"/><circle cx="11.2" cy="19" r="2.9" fill="#650808"/><circle cx="21.5" cy="19" r="2.9" fill="#650808"/><circle cx="31.8" cy="19" r="2.9" fill="#650808"/><circle cx="3.2" cy="20.2" r="1.6" fill="#650808"/><circle cx="40.1" cy="20.2" r="1.6" fill="#650808"/></g>
<text x="697.3" y="238" class="num" text-anchor="middle">2</text>
<rect x="250" y="282.1" width="25" height="5.5" fill="#000"/>
<rect x="251.4" y="283.55" width="2.8" height="2.6" fill="#3c3c3c"/>
<rect x="269.8" y="283.55" width="2.8" height="2.6" fill="#3c3c3c"/>
<rect x="256" y="283.15" width="2.8" height="3.4" rx="0.8" fill="#d6d6d6"/>
<rect x="265.6" y="283.15" width="2.8" height="3.4" rx="0.8" fill="#d6d6d6"/>
<circle cx="262.1" cy="284.65" r="3.35" fill="#20ee20" stroke="#7a5a9a" stroke-width="0.25"/>
<text x="251" y="278.9" class="lb">fb06+</text>
<rect x="275.7" y="275.8" width="93.6" height="17.5" fill="#fff" stroke="#000" stroke-width="1.4"/>
<text x="282" y="288" class="bt">bk06</text>
<path d="M278.5,288.5 v3.5 M276.75,290.25 h3.5" stroke="#111" stroke-width="0.8"/>
<rect x="370" y="282.1" width="25" height="5.5" fill="#000"/>
<rect x="371.4" y="283.55" width="2.8" height="2.6" fill="#3c3c3c"/>
<rect x="389.8" y="283.55" width="2.8" height="2.6" fill="#3c3c3c"/>
<rect x="376" y="283.15" width="2.8" height="3.4" rx="0.8" fill="#d6d6d6"/>
<rect x="385.6" y="283.15" width="2.8" height="3.4" rx="0.8" fill="#d6d6d6"/>
<circle cx="382.1" cy="284.65" r="3.35" fill="#20ee20" stroke="#7a5a9a" stroke-width="0.25"/>
<text x="371" y="278.9" class="lb">fb06-</text>
<rect x="394" y="282.1" width="25" height="5.5" fill="#000"/>
<rect x="395.4" y="283.55" width="2.8" height="2.6" fill="#3c3c3c"/>
<rect x="413.8" y="283.55" width="2.8" height="2.6" fill="#3c3c3c"/>
<rect x="400.2" y="283.3" width="12" height="3.1" rx="0.7" fill="#d6d6d6"/>
<rect x="418" y="282.1" width="25" height="5.5" fill="#000"/>
<rect x="419.4" y="283.55" width="2.8" height="2.6" fill="#3c3c3c"/>
<rect x="437.8" y="283.55" width="2.8" height="2.6" fill="#3c3c3c"/>
<rect x="424" y="283.15" width="2.8" height="3.4" rx="0.8" fill="#d6d6d6"/>
<rect x="433.6" y="283.15" width="2.8" height="3.4" rx="0.8" fill="#d6d6d6"/>
<circle cx="430.1" cy="284.65" r="3.35" fill="#20ee20" stroke="#7a5a9a" stroke-width="0.25"/>
<text x="419" y="278.9" class="lb">fb51+</text>
<rect x="443.7" y="275.8" width="93.6" height="17.5" fill="#fff" stroke="#000" stroke-width="1.4"/>
<text x="450" y="288" class="bt">bk51</text>
<path d="M446.5,288.5 v3.5 M444.75,290.25 h3.5" stroke="#111" stroke-width="0.8"/>
<rect x="538" y="282.1" width="25" height="5.5" fill="#000"/>
<rect x="539.4" y="283.55" width="2.8" height="2.6" fill="#3c3c3c"/>
<rect x="557.8" y="283.55" width="2.8" height="2.6" fill="#3c3c3c"/>
<rect x="544" y="283.15" width="2.8" height="3.4" rx="0.8" fill="#d6d6d6"/>
<rect x="553.6" y="283.15" width="2.8" height="3.4" rx="0.8" fill="#d6d6d6"/>
<circle cx="550.1" cy="284.65" r="3.35" fill="#20ee20" stroke="#7a5a9a" stroke-width="0.25"/>
<text x="539" y="278.9" class="lb">fb51-</text>
<rect x="562" y="282.1" width="25" height="5.5" fill="#000"/>
<rect x="563.4" y="283.55" width="2.8" height="2.6" fill="#3c3c3c"/>
<rect x="581.8" y="283.55" width="2.8" height="2.6" fill="#3c3c3c"/>
<rect x="568" y="283.15" width="2.8" height="3.4" rx="0.8" fill="#d6d6d6"/>
<rect x="577.6" y="283.15" width="2.8" height="3.4" rx="0.8" fill="#d6d6d6"/>
<circle cx="574.1" cy="284.65" r="3.35" fill="#20ee20" stroke="#7a5a9a" stroke-width="0.25"/>
<text x="563" y="278.9" class="lb">fb52+</text>
<rect x="587.7" y="275.8" width="93.6" height="17.5" fill="#fff" stroke="#000" stroke-width="1.4"/>
<text x="594" y="288" class="bt">bk52</text>
<path d="M590.5,288.5 v3.5 M588.75,290.25 h3.5" stroke="#111" stroke-width="0.8"/>
<rect x="682" y="282.1" width="25" height="5.5" fill="#000"/>
<rect x="683.4" y="283.55" width="2.8" height="2.6" fill="#3c3c3c"/>
<rect x="701.8" y="283.55" width="2.8" height="2.6" fill="#3c3c3c"/>
<rect x="688" y="283.15" width="2.8" height="3.4" rx="0.8" fill="#d6d6d6"/>
<rect x="697.6" y="283.15" width="2.8" height="3.4" rx="0.8" fill="#d6d6d6"/>
<circle cx="694.1" cy="284.65" r="3.35" fill="#20ee20" stroke="#7a5a9a" stroke-width="0.25"/>
<text x="683" y="278.9" class="lb">fb52-</text>
<path d="M704,284.85 L706,284.85 L717.85,297 L717.85,299" fill="none" stroke="#000" stroke-width="4.9" stroke-linejoin="miter" stroke-miterlimit="3"/>
<line x1="708.96" y1="287.88" x2="714.89" y2="293.97" stroke="#d6d6d6" stroke-width="2.8"/>
<rect x="715.1" y="297" width="5.5" height="24" fill="#000"/>
<rect x="716.55" y="298.4" width="2.6" height="2.8" fill="#3c3c3c"/>
<rect x="716.55" y="316.8" width="2.6" height="2.8" fill="#3c3c3c"/>
<rect x="716.3" y="303.2" width="3.1" height="12" rx="0.7" fill="#d6d6d6"/>
<path d="M717.85,319 L717.85,321 L706,332.85 L704,332.85" fill="none" stroke="#000" stroke-width="4.9" stroke-linejoin="miter" stroke-miterlimit="3"/>
<line x1="714.93" y1="323.92" x2="708.92" y2="329.93" stroke="#d6d6d6" stroke-width="2.8"/>
<rect x="418" y="330.1" width="288" height="5.5" fill="#000"/>
<rect x="419.4" y="331.55" width="2.8" height="2.6" fill="#3c3c3c"/>
<rect x="437.8" y="331.55" width="2.8" height="2.6" fill="#3c3c3c"/>
<rect x="424.2" y="331.3" width="12" height="3.1" rx="0.7" fill="#d6d6d6"/>
<rect x="443.4" y="331.55" width="2.8" height="2.6" fill="#3c3c3c"/>
<rect x="461.8" y="331.55" width="2.8" height="2.6" fill="#3c3c3c"/>
<rect x="448.2" y="331.3" width="12" height="3.1" rx="0.7" fill="#d6d6d6"/>
<rect x="467.4" y="331.55" width="2.8" height="2.6" fill="#3c3c3c"/>
<rect x="485.8" y="331.55" width="2.8" height="2.6" fill="#3c3c3c"/>
<rect x="472.2" y="331.3" width="12" height="3.1" rx="0.7" fill="#d6d6d6"/>
<rect x="491.4" y="331.55" width="2.8" height="2.6" fill="#3c3c3c"/>
<rect x="509.8" y="331.55" width="2.8" height="2.6" fill="#3c3c3c"/>
<rect x="496.2" y="331.3" width="12" height="3.1" rx="0.7" fill="#d6d6d6"/>
<rect x="515.4" y="331.55" width="2.8" height="2.6" fill="#3c3c3c"/>
<rect x="533.8" y="331.55" width="2.8" height="2.6" fill="#3c3c3c"/>
<rect x="520.2" y="331.3" width="12" height="3.1" rx="0.7" fill="#d6d6d6"/>
<rect x="539.4" y="331.55" width="2.8" height="2.6" fill="#3c3c3c"/>
<rect x="557.8" y="331.55" width="2.8" height="2.6" fill="#3c3c3c"/>
<rect x="544.2" y="331.3" width="12" height="3.1" rx="0.7" fill="#d6d6d6"/>
<rect x="563.4" y="331.55" width="2.8" height="2.6" fill="#3c3c3c"/>
<rect x="581.8" y="331.55" width="2.8" height="2.6" fill="#3c3c3c"/>
<rect x="568.2" y="331.3" width="12" height="3.1" rx="0.7" fill="#d6d6d6"/>
<rect x="587.4" y="331.55" width="2.8" height="2.6" fill="#3c3c3c"/>
<rect x="605.8" y="331.55" width="2.8" height="2.6" fill="#3c3c3c"/>
<rect x="592.2" y="331.3" width="12" height="3.1" rx="0.7" fill="#d6d6d6"/>
<rect x="611.4" y="331.55" width="2.8" height="2.6" fill="#3c3c3c"/>
<rect x="629.8" y="331.55" width="2.8" height="2.6" fill="#3c3c3c"/>
<rect x="616.2" y="331.3" width="12" height="3.1" rx="0.7" fill="#d6d6d6"/>
<rect x="635.4" y="331.55" width="2.8" height="2.6" fill="#3c3c3c"/>
<rect x="653.8" y="331.55" width="2.8" height="2.6" fill="#3c3c3c"/>
<rect x="640.2" y="331.3" width="12" height="3.1" rx="0.7" fill="#d6d6d6"/>
<rect x="659.4" y="331.55" width="2.8" height="2.6" fill="#3c3c3c"/>
<rect x="677.8" y="331.55" width="2.8" height="2.6" fill="#3c3c3c"/>
<rect x="664.2" y="331.3" width="12" height="3.1" rx="0.7" fill="#d6d6d6"/>
<rect x="683.4" y="331.55" width="2.8" height="2.6" fill="#3c3c3c"/>
<rect x="701.8" y="331.55" width="2.8" height="2.6" fill="#3c3c3c"/>
<rect x="688.2" y="331.3" width="12" height="3.1" rx="0.7" fill="#d6d6d6"/>
<path d="M420,332.85 L418,332.85 L405.85,345 L405.85,347" fill="none" stroke="#000" stroke-width="4.9" stroke-linejoin="miter" stroke-miterlimit="3"/>
<line x1="414.93" y1="335.92" x2="408.92" y2="341.93" stroke="#d6d6d6" stroke-width="2.8"/>
<rect x="403.1" y="345" width="5.5" height="24" fill="#000"/>
<rect x="404.55" y="346.4" width="2.6" height="2.8" fill="#3c3c3c"/>
<rect x="404.55" y="364.8" width="2.6" height="2.8" fill="#3c3c3c"/>
<rect x="404.3" y="351.2" width="3.1" height="12" rx="0.7" fill="#d6d6d6"/>
<path d="M405.85,367 L405.85,369 L418,380.85 L420,380.85" fill="none" stroke="#000" stroke-width="4.9" stroke-linejoin="miter" stroke-miterlimit="3"/>
<line x1="408.88" y1="371.96" x2="414.97" y2="377.89" stroke="#d6d6d6" stroke-width="2.8"/>
<rect x="515.5" y="299.6" width="94" height="17.9" fill="#fff" stroke="#7a7a7a" stroke-width="1.2" stroke-dasharray="1.4 1.2"/>
<text x="522" y="312" class="bt">bk53</text>
<rect x="517.6" y="312.4" width="2" height="2" fill="none" stroke="#777" stroke-width="0.6" transform="rotate(45 518.6 313.4)"/>
<rect x="659" y="346" width="47" height="23" fill="#fff"/>
<g transform="translate(659,347)"><rect x="7.6" y="0" width="4.4" height="1.3" fill="#000"/><rect x="8.3" y="0" width="3.5" height="7" fill="#000"/><rect x="17.5" y="3.6" width="4" height="3" fill="#000"/><rect x="25.5" y="3.6" width="4.3" height="3" fill="#000"/><path d="M4.7,6 H41 V15 H4.7 A3,4.5 0 0 1 4.7,6 Z" fill="#000"/><rect x="34" y="2.2" width="8.7" height="12.8" fill="#000"/><rect x="33.6" y="1.8" width="11.6" height="1.1" fill="#222"/><rect x="35" y="3" width="6.8" height="6.6" fill="#f8a43c"/><rect x="0.9" y="16.6" width="44.4" height="1.2" fill="#333"/><circle cx="11.2" cy="19" r="2.9" fill="#650808"/><circle cx="21.5" cy="19" r="2.9" fill="#650808"/><circle cx="31.8" cy="19" r="2.9" fill="#650808"/><circle cx="3.2" cy="20.2" r="1.6" fill="#650808"/><circle cx="40.1" cy="20.2" r="1.6" fill="#650808"/></g>
<rect x="418" y="378.1" width="25" height="5.5" fill="#000"/>
<rect x="419.4" y="379.55" width="2.8" height="2.6" fill="#3c3c3c"/>
<rect x="437.8" y="379.55" width="2.8" height="2.6" fill="#3c3c3c"/>
<rect x="424.2" y="379.3" width="12" height="3.1" rx="0.7" fill="#d6d6d6"/>
<rect x="442" y="378.1" width="25" height="5.5" fill="#000"/>
<rect x="443.4" y="379.55" width="2.8" height="2.6" fill="#3c3c3c"/>
<rect x="461.8" y="379.55" width="2.8" height="2.6" fill="#3c3c3c"/>
<rect x="448.2" y="379.3" width="12" height="3.1" rx="0.7" fill="#d6d6d6"/>
<text x="443" y="374.9" class="lb">sw8</text>
<path d="M440,380.85 L442,380.85 L453.85,393 L453.85,395" fill="none" stroke="#000" stroke-width="4.9" stroke-linejoin="miter" stroke-miterlimit="3"/>
<line x1="444.96" y1="383.88" x2="450.89" y2="389.97" stroke="#f4ec1a" stroke-width="2.8"/>
<rect x="466" y="378.1" width="25" height="5.5" fill="#000"/>
<rect x="467.4" y="379.55" width="2.8" height="2.6" fill="#3c3c3c"/>
<rect x="485.8" y="379.55" width="2.8" height="2.6" fill="#3c3c3c"/>
<rect x="472" y="379.15" width="2.8" height="3.4" rx="0.8" fill="#d6d6d6"/>
<rect x="481.6" y="379.15" width="2.8" height="3.4" rx="0.8" fill="#d6d6d6"/>
<circle cx="478.1" cy="380.65" r="3.35" fill="#20ee20" stroke="#7a5a9a" stroke-width="0.25"/>
<text x="467" y="374.9" class="lb">fb43+</text>
<rect x="491.7" y="371.8" width="93.6" height="17.5" fill="#fff" stroke="#000" stroke-width="1.4"/>
<text x="498" y="384" class="bt">bk43</text>
<path d="M494.5,384.5 v3.5 M492.75,386.25 h3.5" stroke="#111" stroke-width="0.8"/>
<rect x="586" y="378.1" width="25" height="5.5" fill="#000"/>
<rect x="587.4" y="379.55" width="2.8" height="2.6" fill="#3c3c3c"/>
<rect x="605.8" y="379.55" width="2.8" height="2.6" fill="#3c3c3c"/>
<rect x="592" y="379.15" width="2.8" height="3.4" rx="0.8" fill="#d6d6d6"/>
<rect x="601.6" y="379.15" width="2.8" height="3.4" rx="0.8" fill="#d6d6d6"/>
<circle cx="598.1" cy="380.65" r="3.35" fill="#20ee20" stroke="#7a5a9a" stroke-width="0.25"/>
<text x="587" y="374.9" class="lb">fb43-</text>
<rect x="610" y="378.1" width="25" height="5.5" fill="#000"/>
<rect x="611.4" y="379.55" width="2.8" height="2.6" fill="#3c3c3c"/>
<rect x="629.8" y="379.55" width="2.8" height="2.6" fill="#3c3c3c"/>
<rect x="616.2" y="379.3" width="12" height="3.1" rx="0.7" fill="#d6d6d6"/>
<text x="611" y="374.9" class="lb">sw6</text>
<path d="M608,380.85 L610,380.85 L634,404.85 L636,404.85" fill="none" stroke="#000" stroke-width="4.9" stroke-linejoin="miter" stroke-miterlimit="3"/>
<line x1="612.99" y1="383.84" x2="619.01" y2="389.86" stroke="#f4ec1a" stroke-width="2.8"/>
<line x1="621.08" y1="391.93" x2="622.92" y2="393.77" stroke="#3c3c3c" stroke-width="2.4"/>
<line x1="624.99" y1="395.84" x2="631.01" y2="401.86" stroke="#d6d6d6" stroke-width="2.8"/>
<rect x="634" y="378.1" width="25" height="5.5" fill="#000"/>
<rect x="635.4" y="379.55" width="2.8" height="2.6" fill="#3c3c3c"/>
<rect x="653.8" y="379.55" width="2.8" height="2.6" fill="#3c3c3c"/>
<rect x="640" y="379.15" width="2.8" height="3.4" rx="0.8" fill="#f23a1c"/>
<rect x="649.6" y="379.15" width="2.8" height="3.4" rx="0.8" fill="#f23a1c"/>
<circle cx="646.1" cy="380.65" r="3.35" fill="#20ee20" stroke="#7a5a9a" stroke-width="0.25"/>
<text x="635" y="374.9" class="lb">fb41+</text>
<rect x="659.7" y="371.8" width="45.6" height="17.5" fill="#fcd4d4" stroke="#000" stroke-width="1.4"/>
<path d="M661.2,380.3 L664.4,377.6 L664.4,383 Z" fill="#000"/>
<text x="666" y="384" class="bt">lc_03</text>
<path d="M662.5,384.5 v3.5 M660.75,386.25 h3.5" stroke="#111" stroke-width="0.8"/>
<rect x="706" y="378.1" width="25" height="5.5" fill="#000"/>
<rect x="707.4" y="379.55" width="2.8" height="2.6" fill="#3c3c3c"/>
<rect x="725.8" y="379.55" width="2.8" height="2.6" fill="#3c3c3c"/>
<rect x="712" y="379.15" width="2.8" height="3.4" rx="0.8" fill="#f23a1c"/>
<rect x="721.6" y="379.15" width="2.8" height="3.4" rx="0.8" fill="#f23a1c"/>
<circle cx="718.1" cy="380.65" r="3.35" fill="#20ee20" stroke="#7a5a9a" stroke-width="0.25"/>
<text x="707" y="374.9" class="lb">fb41-</text>
<rect x="730" y="378.1" width="19.5" height="5.5" fill="#000"/>
<rect x="731.4" y="379.55" width="2.8" height="2.6" fill="#3c3c3c"/>
<rect x="736.3" y="379.3" width="12.2" height="3.1" fill="#f23a1c"/>
<rect x="748.6" y="374.35" width="2.5" height="13" rx="0.6" fill="#000"/>
<circle cx="767.3" cy="382.0" r="8.3" fill="#8a8a8a" opacity="0.55"/>
<circle cx="766" cy="380.5" r="7.7" fill="#ff2a1c" stroke="#1c2c30" stroke-width="1.3"/>
<text x="755" y="375" class="lb">co...</text>
<rect x="451.1" y="393" width="5.5" height="72" fill="#000"/>
<rect x="452.55" y="394.4" width="2.6" height="2.8" fill="#3c3c3c"/>
<rect x="452.55" y="412.8" width="2.6" height="2.8" fill="#3c3c3c"/>
<rect x="452.3" y="399.2" width="3.1" height="12" rx="0.7" fill="#d6d6d6"/>
<rect x="452.55" y="418.4" width="2.6" height="2.8" fill="#3c3c3c"/>
<rect x="452.55" y="436.8" width="2.6" height="2.8" fill="#3c3c3c"/>
<rect x="452.3" y="423.2" width="3.1" height="12" rx="0.7" fill="#d6d6d6"/>
<rect x="452.55" y="442.4" width="2.6" height="2.8" fill="#3c3c3c"/>
<rect x="452.55" y="460.8" width="2.6" height="2.8" fill="#3c3c3c"/>
<rect x="452.3" y="447.2" width="3.1" height="12" rx="0.7" fill="#d6d6d6"/>
<rect x="634" y="402.1" width="25" height="5.5" fill="#000"/>
<rect x="635.4" y="403.55" width="2.8" height="2.6" fill="#3c3c3c"/>
<rect x="653.8" y="403.55" width="2.8" height="2.6" fill="#3c3c3c"/>
<rect x="640" y="403.15" width="2.8" height="3.4" rx="0.8" fill="#d6d6d6"/>
<rect x="649.6" y="403.15" width="2.8" height="3.4" rx="0.8" fill="#d6d6d6"/>
<circle cx="646.1" cy="404.65" r="3.35" fill="#20ee20" stroke="#7a5a9a" stroke-width="0.25"/>
<text x="635" y="398.9" class="lb">fb42+</text>
<rect x="659.7" y="395.8" width="93.6" height="17.5" fill="#fff" stroke="#000" stroke-width="1.4"/>
<text x="666" y="408" class="bt">bk42#1</text>
<path d="M662.5,408.5 v3.5 M660.75,410.25 h3.5" stroke="#111" stroke-width="0.8"/>
<rect x="754" y="402.1" width="25" height="5.5" fill="#000"/>
<rect x="755.4" y="403.55" width="2.8" height="2.6" fill="#3c3c3c"/>
<rect x="773.8" y="403.55" width="2.8" height="2.6" fill="#3c3c3c"/>
<rect x="760" y="403.15" width="2.8" height="3.4" rx="0.8" fill="#d6d6d6"/>
<rect x="769.6" y="403.15" width="2.8" height="3.4" rx="0.8" fill="#d6d6d6"/>
<circle cx="766.1" cy="404.65" r="3.35" fill="#20ee20" stroke="#7a5a9a" stroke-width="0.25"/>
<text x="755" y="398.9" class="lb">fb42-</text>
<rect x="778" y="402.1" width="19.5" height="5.5" fill="#000"/>
<rect x="779.4" y="403.55" width="2.8" height="2.6" fill="#3c3c3c"/>
<rect x="784.3" y="403.3" width="12.2" height="3.1" fill="#d6d6d6"/>
<rect x="796.6" y="398.35" width="2.5" height="13" rx="0.6" fill="#000"/>
<rect x="706" y="418" width="47" height="23" fill="#fff"/>
<g transform="translate(707.7,421)"><rect x="0" y="0" width="43.6" height="13.6" rx="0.6" fill="#000"/><rect x="-0.3" y="14.7" width="44" height="1.1" fill="#3a3a3a"/><rect x="1.6" y="3.2" width="4.2" height="7.1" fill="#dcdcdc"/><rect x="7.6" y="3.2" width="5.8" height="7.1" fill="#f8a43c"/><rect x="15.2" y="3.2" width="5.8" height="7.1" fill="#f8a43c"/><rect x="22.8" y="3.2" width="5.6" height="7.1" fill="#f8a43c"/><rect x="30.3" y="3.2" width="5.9" height="7.1" fill="#f8a43c"/><rect x="38.2" y="3.2" width="4" height="7.1" fill="#dcdcdc"/><circle cx="6.6" cy="17.8" r="1.7" fill="#650808"/><circle cx="37" cy="17.8" r="1.7" fill="#650808"/></g>
<text x="719.2" y="432.6" class="num2" text-anchor="middle">1</text>
<rect x="659" y="442" width="47" height="23" fill="#fff"/>
<g transform="translate(659,443)"><rect x="7.6" y="0" width="4.4" height="1.3" fill="#000"/><rect x="8.3" y="0" width="3.5" height="7" fill="#000"/><rect x="17.5" y="3.6" width="4" height="3" fill="#000"/><rect x="25.5" y="3.6" width="4.3" height="3" fill="#000"/><path d="M4.7,6 H41 V15 H4.7 A3,4.5 0 0 1 4.7,6 Z" fill="#000"/><rect x="34" y="2.2" width="8.7" height="12.8" fill="#000"/><rect x="33.6" y="1.8" width="11.6" height="1.1" fill="#222"/><rect x="35" y="3" width="6.8" height="6.6" fill="#ff55ff"/><rect x="0.9" y="16.6" width="44.4" height="1.2" fill="#333"/><circle cx="11.2" cy="19" r="2.9" fill="#650808"/><circle cx="21.5" cy="19" r="2.9" fill="#650808"/><circle cx="31.8" cy="19" r="2.9" fill="#650808"/><circle cx="3.2" cy="20.2" r="1.6" fill="#650808"/><circle cx="40.1" cy="20.2" r="1.6" fill="#650808"/></g>
<path d="M453.85,463 L453.85,465 L466,476.85 L468,476.85" fill="none" stroke="#000" stroke-width="4.9" stroke-linejoin="miter" stroke-miterlimit="3"/>
<line x1="456.88" y1="467.96" x2="462.97" y2="473.89" stroke="#d6d6d6" stroke-width="2.8"/>
<rect x="466" y="474.1" width="25" height="5.5" fill="#000"/>
<rect x="467.4" y="475.55" width="2.8" height="2.6" fill="#3c3c3c"/>
<rect x="485.8" y="475.55" width="2.8" height="2.6" fill="#3c3c3c"/>
<rect x="472" y="475.15" width="2.8" height="3.4" rx="0.8" fill="#d6d6d6"/>
<rect x="481.6" y="475.15" width="2.8" height="3.4" rx="0.8" fill="#d6d6d6"/>
<circle cx="478.1" cy="476.65" r="3.35" fill="#20ee20" stroke="#7a5a9a" stroke-width="0.25"/>
<text x="467" y="470.9" class="lb">fb48+</text>
<rect x="491.7" y="467.8" width="93.6" height="17.5" fill="#fff" stroke="#000" stroke-width="1.4"/>
<text x="498" y="480" class="bt">bk48</text>
<path d="M494.5,480.5 v3.5 M492.75,482.25 h3.5" stroke="#111" stroke-width="0.8"/>
<rect x="586" y="474.1" width="25" height="5.5" fill="#000"/>
<rect x="587.4" y="475.55" width="2.8" height="2.6" fill="#3c3c3c"/>
<rect x="605.8" y="475.55" width="2.8" height="2.6" fill="#3c3c3c"/>
<rect x="592" y="475.15" width="2.8" height="3.4" rx="0.8" fill="#d6d6d6"/>
<rect x="601.6" y="475.15" width="2.8" height="3.4" rx="0.8" fill="#d6d6d6"/>
<circle cx="598.1" cy="476.65" r="3.35" fill="#20ee20" stroke="#7a5a9a" stroke-width="0.25"/>
<text x="587" y="470.9" class="lb">fb48-</text>
<rect x="610" y="474.1" width="25" height="5.5" fill="#000"/>
<rect x="611.4" y="475.55" width="2.8" height="2.6" fill="#3c3c3c"/>
<rect x="629.8" y="475.55" width="2.8" height="2.6" fill="#3c3c3c"/>
<rect x="616.2" y="475.3" width="12" height="3.1" rx="0.7" fill="#d6d6d6"/>
<text x="611" y="470.9" class="lb">sw7</text>
<path d="M608,476.85 L610,476.85 L634,500.85 L636,500.85" fill="none" stroke="#000" stroke-width="4.9" stroke-linejoin="miter" stroke-miterlimit="3"/>
<line x1="612.99" y1="479.84" x2="619.01" y2="485.86" stroke="#f4ec1a" stroke-width="2.8"/>
<line x1="621.08" y1="487.93" x2="622.92" y2="489.77" stroke="#3c3c3c" stroke-width="2.4"/>
<line x1="624.99" y1="491.84" x2="631.01" y2="497.86" stroke="#d6d6d6" stroke-width="2.8"/>
<rect x="634" y="474.1" width="25" height="5.5" fill="#000"/>
<rect x="635.4" y="475.55" width="2.8" height="2.6" fill="#3c3c3c"/>
<rect x="653.8" y="475.55" width="2.8" height="2.6" fill="#3c3c3c"/>
<rect x="640" y="475.15" width="2.8" height="3.4" rx="0.8" fill="#f23a1c"/>
<rect x="649.6" y="475.15" width="2.8" height="3.4" rx="0.8" fill="#f23a1c"/>
<circle cx="646.1" cy="476.65" r="3.35" fill="#20ee20" stroke="#7a5a9a" stroke-width="0.25"/>
<text x="635" y="470.9" class="lb">fb46+</text>
<rect x="659.7" y="467.8" width="45.6" height="17.5" fill="#fcd4d4" stroke="#000" stroke-width="1.4"/>
<path d="M661.2,476.3 L664.4,473.6 L664.4,479 Z" fill="#000"/>
<text x="666" y="480" class="bt">lc_04</text>
<path d="M662.5,480.5 v3.5 M660.75,482.25 h3.5" stroke="#111" stroke-width="0.8"/>
<rect x="706" y="474.1" width="25" height="5.5" fill="#000"/>
<rect x="707.4" y="475.55" width="2.8" height="2.6" fill="#3c3c3c"/>
<rect x="725.8" y="475.55" width="2.8" height="2.6" fill="#3c3c3c"/>
<rect x="712" y="475.15" width="2.8" height="3.4" rx="0.8" fill="#f23a1c"/>
<rect x="721.6" y="475.15" width="2.8" height="3.4" rx="0.8" fill="#f23a1c"/>
<circle cx="718.1" cy="476.65" r="3.35" fill="#20ee20" stroke="#7a5a9a" stroke-width="0.25"/>
<text x="707" y="470.9" class="lb">fb46-</text>
<rect x="730" y="474.1" width="19.5" height="5.5" fill="#000"/>
<rect x="731.4" y="475.55" width="2.8" height="2.6" fill="#3c3c3c"/>
<rect x="736.3" y="475.3" width="12.2" height="3.1" fill="#f23a1c"/>
<rect x="748.6" y="470.35" width="2.5" height="13" rx="0.6" fill="#000"/>
<rect x="634" y="498.1" width="25" height="5.5" fill="#000"/>
<rect x="635.4" y="499.55" width="2.8" height="2.6" fill="#3c3c3c"/>
<rect x="653.8" y="499.55" width="2.8" height="2.6" fill="#3c3c3c"/>
<rect x="640" y="499.15" width="2.8" height="3.4" rx="0.8" fill="#d6d6d6"/>
<rect x="649.6" y="499.15" width="2.8" height="3.4" rx="0.8" fill="#d6d6d6"/>
<circle cx="646.1" cy="500.65" r="3.35" fill="#20ee20" stroke="#7a5a9a" stroke-width="0.25"/>
<text x="635" y="494.9" class="lb">fb47+</text>
<rect x="659.7" y="491.8" width="93.6" height="17.5" fill="#fff" stroke="#000" stroke-width="1.4"/>
<text x="666" y="504" class="bt">bk47#2</text>
<path d="M662.5,504.5 v3.5 M660.75,506.25 h3.5" stroke="#111" stroke-width="0.8"/>
<rect x="754" y="498.1" width="25" height="5.5" fill="#000"/>
<rect x="755.4" y="499.55" width="2.8" height="2.6" fill="#3c3c3c"/>
<rect x="773.8" y="499.55" width="2.8" height="2.6" fill="#3c3c3c"/>
<rect x="760" y="499.15" width="2.8" height="3.4" rx="0.8" fill="#d6d6d6"/>
<rect x="769.6" y="499.15" width="2.8" height="3.4" rx="0.8" fill="#d6d6d6"/>
<circle cx="766.1" cy="500.65" r="3.35" fill="#20ee20" stroke="#7a5a9a" stroke-width="0.25"/>
<text x="755" y="494.9" class="lb">fb47-</text>
<rect x="778" y="498.1" width="19.5" height="5.5" fill="#000"/>
<rect x="779.4" y="499.55" width="2.8" height="2.6" fill="#3c3c3c"/>
<rect x="784.3" y="499.3" width="12.2" height="3.1" fill="#d6d6d6"/>
<rect x="796.6" y="494.35" width="2.5" height="13" rx="0.6" fill="#000"/>
<rect x="682" y="514" width="47" height="23" fill="#fff"/>
<g transform="translate(683.7,517)"><rect x="0" y="0" width="43.6" height="13.6" rx="0.6" fill="#000"/><rect x="-0.3" y="14.7" width="44" height="1.1" fill="#3a3a3a"/><rect x="1.6" y="3.2" width="4.2" height="7.1" fill="#dcdcdc"/><rect x="7.6" y="3.2" width="5.8" height="7.1" fill="#ff55ff"/><rect x="15.2" y="3.2" width="5.8" height="7.1" fill="#ff55ff"/><rect x="22.8" y="3.2" width="5.6" height="7.1" fill="#ff55ff"/><rect x="30.3" y="3.2" width="5.9" height="7.1" fill="#ff55ff"/><rect x="38.2" y="3.2" width="4" height="7.1" fill="#dcdcdc"/><circle cx="6.6" cy="17.8" r="1.7" fill="#650808"/><circle cx="37" cy="17.8" r="1.7" fill="#650808"/></g>
<text x="695.2" y="528.6" class="num2" text-anchor="middle">1</text>
<rect x="730" y="514" width="47" height="23" fill="#fff"/>
<g transform="translate(731.7,517)"><rect x="0" y="0" width="43.6" height="13.6" rx="0.6" fill="#000"/><rect x="-0.3" y="14.7" width="44" height="1.1" fill="#3a3a3a"/><rect x="1.6" y="3.2" width="4.2" height="7.1" fill="#dcdcdc"/><rect x="7.6" y="3.2" width="5.8" height="7.1" fill="#ff55ff"/><rect x="15.2" y="3.2" width="5.8" height="7.1" fill="#ff55ff"/><rect x="22.8" y="3.2" width="5.6" height="7.1" fill="#ff55ff"/><rect x="30.3" y="3.2" width="5.9" height="7.1" fill="#ff55ff"/><rect x="38.2" y="3.2" width="4" height="7.1" fill="#dcdcdc"/><circle cx="6.6" cy="17.8" r="1.7" fill="#650808"/><circle cx="37" cy="17.8" r="1.7" fill="#650808"/></g>
<text x="749.2" y="528.6" class="num2" text-anchor="middle">2</text>
<rect x="35" y="370" width="47" height="23" fill="#fff"/>
<g transform="translate(35,371)"><rect x="7.6" y="0" width="4.4" height="1.3" fill="#000"/><rect x="8.3" y="0" width="3.5" height="7" fill="#000"/><rect x="17.5" y="3.6" width="4" height="3" fill="#000"/><rect x="25.5" y="3.6" width="4.3" height="3" fill="#000"/><path d="M4.7,6 H41 V15 H4.7 A3,4.5 0 0 1 4.7,6 Z" fill="#000"/><rect x="34" y="2.2" width="8.7" height="12.8" fill="#000"/><rect x="33.6" y="1.8" width="11.6" height="1.1" fill="#222"/><rect x="35" y="3" width="6.8" height="6.6" fill="#22f2f6"/><rect x="0.9" y="16.6" width="44.4" height="1.2" fill="#333"/><circle cx="11.2" cy="19" r="2.9" fill="#650808"/><circle cx="21.5" cy="19" r="2.9" fill="#650808"/><circle cx="31.8" cy="19" r="2.9" fill="#650808"/><circle cx="3.2" cy="20.2" r="1.6" fill="#650808"/><circle cx="40.1" cy="20.2" r="1.6" fill="#650808"/></g>
<text x="73.3" y="382" class="num" text-anchor="middle">1</text>
<rect x="107" y="370" width="47" height="23" fill="#fff"/>
<g transform="translate(107,371)"><rect x="7.6" y="0" width="4.4" height="1.3" fill="#000"/><rect x="8.3" y="0" width="3.5" height="7" fill="#000"/><rect x="17.5" y="3.6" width="4" height="3" fill="#000"/><rect x="25.5" y="3.6" width="4.3" height="3" fill="#000"/><path d="M4.7,6 H41 V15 H4.7 A3,4.5 0 0 1 4.7,6 Z" fill="#000"/><rect x="34" y="2.2" width="8.7" height="12.8" fill="#000"/><rect x="33.6" y="1.8" width="11.6" height="1.1" fill="#222"/><rect x="35" y="3" width="6.8" height="6.6" fill="#22f2f6"/><rect x="0.9" y="16.6" width="44.4" height="1.2" fill="#333"/><circle cx="11.2" cy="19" r="2.9" fill="#650808"/><circle cx="21.5" cy="19" r="2.9" fill="#650808"/><circle cx="31.8" cy="19" r="2.9" fill="#650808"/><circle cx="3.2" cy="20.2" r="1.6" fill="#650808"/><circle cx="40.1" cy="20.2" r="1.6" fill="#650808"/></g>
<text x="145.3" y="382" class="num" text-anchor="middle">2</text>
<rect x="178" y="370" width="47" height="23" fill="#fff"/>
<g transform="translate(179.7,373)"><rect x="0" y="0" width="43.6" height="13.6" rx="0.6" fill="#000"/><rect x="-0.3" y="14.7" width="44" height="1.1" fill="#3a3a3a"/><rect x="1.6" y="3.2" width="4.2" height="7.1" fill="#22f2f6"/><rect x="7.6" y="3.2" width="5.8" height="7.1" fill="#dcdcdc"/><rect x="15.2" y="3.2" width="5.8" height="7.1" fill="#dcdcdc"/><rect x="22.8" y="3.2" width="5.6" height="7.1" fill="#dcdcdc"/><rect x="30.3" y="3.2" width="5.9" height="7.1" fill="#dcdcdc"/><rect x="38.2" y="3.2" width="4" height="7.1" fill="#dcdcdc"/><circle cx="6.6" cy="17.8" r="1.7" fill="#650808"/><circle cx="37" cy="17.8" r="1.7" fill="#650808"/></g>
<text x="191.2" y="384.6" class="num2" text-anchor="middle">1</text>
<rect x="226" y="370" width="47" height="23" fill="#fff"/>
<g transform="translate(227.7,373)"><rect x="0" y="0" width="43.6" height="13.6" rx="0.6" fill="#000"/><rect x="-0.3" y="14.7" width="44" height="1.1" fill="#3a3a3a"/><rect x="1.6" y="3.2" width="4.2" height="7.1" fill="#22f2f6"/><rect x="7.6" y="3.2" width="5.8" height="7.1" fill="#dcdcdc"/><rect x="15.2" y="3.2" width="5.8" height="7.1" fill="#dcdcdc"/><rect x="22.8" y="3.2" width="5.6" height="7.1" fill="#dcdcdc"/><rect x="30.3" y="3.2" width="5.9" height="7.1" fill="#dcdcdc"/><rect x="38.2" y="3.2" width="4" height="7.1" fill="#dcdcdc"/><circle cx="6.6" cy="17.8" r="1.7" fill="#650808"/><circle cx="37" cy="17.8" r="1.7" fill="#650808"/></g>
<text x="245.2" y="384.6" class="num2" text-anchor="middle">2</text>
<rect x="274" y="370" width="47" height="23" fill="#fff"/>
<g transform="translate(275.7,373)"><rect x="0" y="0" width="43.6" height="13.6" rx="0.6" fill="#000"/><rect x="-0.3" y="14.7" width="44" height="1.1" fill="#3a3a3a"/><rect x="1.6" y="3.2" width="4.2" height="7.1" fill="#22f2f6"/><rect x="7.6" y="3.2" width="5.8" height="7.1" fill="#dcdcdc"/><rect x="15.2" y="3.2" width="5.8" height="7.1" fill="#dcdcdc"/><rect x="22.8" y="3.2" width="5.6" height="7.1" fill="#dcdcdc"/><rect x="30.3" y="3.2" width="5.9" height="7.1" fill="#dcdcdc"/><rect x="38.2" y="3.2" width="4" height="7.1" fill="#dcdcdc"/><circle cx="6.6" cy="17.8" r="1.7" fill="#650808"/><circle cx="37" cy="17.8" r="1.7" fill="#650808"/></g>
<text x="301.7" y="384.6" class="num2" text-anchor="middle">3</text>
<rect x="35" y="466" width="47" height="23" fill="#fff"/>
<g transform="translate(35,467)"><rect x="7.6" y="0" width="4.4" height="1.3" fill="#000"/><rect x="8.3" y="0" width="3.5" height="7" fill="#000"/><rect x="17.5" y="3.6" width="4" height="3" fill="#000"/><rect x="25.5" y="3.6" width="4.3" height="3" fill="#000"/><path d="M4.7,6 H41 V15 H4.7 A3,4.5 0 0 1 4.7,6 Z" fill="#000"/><rect x="34" y="2.2" width="8.7" height="12.8" fill="#000"/><rect x="33.6" y="1.8" width="11.6" height="1.1" fill="#222"/><rect x="35" y="3" width="6.8" height="6.6" fill="#f8a43c"/><rect x="0.9" y="16.6" width="44.4" height="1.2" fill="#333"/><circle cx="11.2" cy="19" r="2.9" fill="#650808"/><circle cx="21.5" cy="19" r="2.9" fill="#650808"/><circle cx="31.8" cy="19" r="2.9" fill="#650808"/><circle cx="3.2" cy="20.2" r="1.6" fill="#650808"/><circle cx="40.1" cy="20.2" r="1.6" fill="#650808"/></g>
<rect x="106" y="466" width="47" height="23" fill="#fff"/>
<g transform="translate(107.7,469)"><rect x="0" y="0" width="43.6" height="13.6" rx="0.6" fill="#000"/><rect x="-0.3" y="14.7" width="44" height="1.1" fill="#3a3a3a"/><rect x="1.6" y="3.2" width="4.2" height="7.1" fill="#dcdcdc"/><rect x="7.6" y="3.2" width="5.8" height="7.1" fill="#f8a43c"/><rect x="15.2" y="3.2" width="5.8" height="7.1" fill="#f8a43c"/><rect x="22.8" y="3.2" width="5.6" height="7.1" fill="#f8a43c"/><rect x="30.3" y="3.2" width="5.9" height="7.1" fill="#f8a43c"/><rect x="38.2" y="3.2" width="4" height="7.1" fill="#dcdcdc"/><circle cx="6.6" cy="17.8" r="1.7" fill="#650808"/><circle cx="37" cy="17.8" r="1.7" fill="#650808"/></g>
<text x="119.2" y="480.6" class="num2" text-anchor="middle">1</text>
<rect x="203" y="466" width="47" height="23" fill="#fff"/>
<g transform="translate(203,467)"><rect x="7.6" y="0" width="4.4" height="1.3" fill="#000"/><rect x="8.3" y="0" width="3.5" height="7" fill="#000"/><rect x="17.5" y="3.6" width="4" height="3" fill="#000"/><rect x="25.5" y="3.6" width="4.3" height="3" fill="#000"/><path d="M4.7,6 H41 V15 H4.7 A3,4.5 0 0 1 4.7,6 Z" fill="#000"/><rect x="34" y="2.2" width="8.7" height="12.8" fill="#000"/><rect x="33.6" y="1.8" width="11.6" height="1.1" fill="#222"/><rect x="35" y="3" width="6.8" height="6.6" fill="#ff55ff"/><rect x="0.9" y="16.6" width="44.4" height="1.2" fill="#333"/><circle cx="11.2" cy="19" r="2.9" fill="#650808"/><circle cx="21.5" cy="19" r="2.9" fill="#650808"/><circle cx="31.8" cy="19" r="2.9" fill="#650808"/><circle cx="3.2" cy="20.2" r="1.6" fill="#650808"/><circle cx="40.1" cy="20.2" r="1.6" fill="#650808"/></g>
<rect x="274" y="466" width="47" height="23" fill="#fff"/>
<g transform="translate(275.7,469)"><rect x="0" y="0" width="43.6" height="13.6" rx="0.6" fill="#000"/><rect x="-0.3" y="14.7" width="44" height="1.1" fill="#3a3a3a"/><rect x="1.6" y="3.2" width="4.2" height="7.1" fill="#dcdcdc"/><rect x="7.6" y="3.2" width="5.8" height="7.1" fill="#ff55ff"/><rect x="15.2" y="3.2" width="5.8" height="7.1" fill="#ff55ff"/><rect x="22.8" y="3.2" width="5.6" height="7.1" fill="#ff55ff"/><rect x="30.3" y="3.2" width="5.9" height="7.1" fill="#ff55ff"/><rect x="38.2" y="3.2" width="4" height="7.1" fill="#dcdcdc"/><circle cx="6.6" cy="17.8" r="1.7" fill="#650808"/><circle cx="37" cy="17.8" r="1.7" fill="#650808"/></g>
<text x="287.2" y="480.6" class="num2" text-anchor="middle">1</text>
<rect x="322" y="466" width="47" height="23" fill="#fff"/>
<g transform="translate(323.7,469)"><rect x="0" y="0" width="43.6" height="13.6" rx="0.6" fill="#000"/><rect x="-0.3" y="14.7" width="44" height="1.1" fill="#3a3a3a"/><rect x="1.6" y="3.2" width="4.2" height="7.1" fill="#dcdcdc"/><rect x="7.6" y="3.2" width="5.8" height="7.1" fill="#ff55ff"/><rect x="15.2" y="3.2" width="5.8" height="7.1" fill="#ff55ff"/><rect x="22.8" y="3.2" width="5.6" height="7.1" fill="#ff55ff"/><rect x="30.3" y="3.2" width="5.9" height="7.1" fill="#ff55ff"/><rect x="38.2" y="3.2" width="4" height="7.1" fill="#dcdcdc"/><circle cx="6.6" cy="17.8" r="1.7" fill="#650808"/><circle cx="37" cy="17.8" r="1.7" fill="#650808"/></g>
<text x="341.2" y="480.6" class="num2" text-anchor="middle">2</text>
<rect x="327.8" y="62.5" width="12.6" height="12.6" fill="#f4f4f4" stroke="#8a8a8a" stroke-width="1.1"/>
<rect x="329.8" y="64" width="9.6" height="9.8" fill="#10ee22"/>
<text x="322.5" y="61" class="lb">co_govirt</text>
<circle cx="875.80" cy="593" r="5.8" fill="#8c8c8c"/>
<circle cx="888.48" cy="593" r="5.25" fill="none" stroke="#999" stroke-width="1.1"/>
<circle cx="901.16" cy="593" r="5.25" fill="none" stroke="#999" stroke-width="1.1"/>
<circle cx="913.84" cy="593" r="5.25" fill="none" stroke="#999" stroke-width="1.1"/>
<circle cx="926.52" cy="593" r="5.25" fill="none" stroke="#999" stroke-width="1.1"/>
<circle cx="939.20" cy="593" r="5.25" fill="none" stroke="#999" stroke-width="1.1"/>
<circle cx="951.88" cy="593" r="5.25" fill="none" stroke="#999" stroke-width="1.1"/>
</svg>
<div class="ob" style="left:34px;top:57px;width:168px;height:24px"></div>
<div class="tx" style="left:35px;top:58px;color:#111;font-weight:bold;font-size:9.4px">en: link locomotives and trains<br>de: Loks und Züge koppeln</div>
<div class="tx" style="left:346px;top:58px;background:#fff;width:152px;height:22px"><b>en:</b> green = govirtual; red = go;<br><b>de:</b> grün = govirtual; rot = go;</div>
<div class="tx" style="left:58px;top:130px;background:#fff;width:143px;height:22px"><b>en:</b> Switch on "Automatic"!<br><b>de:</b> "Automatik" einschalten!</div>
<div class="tx" style="left:58px;top:178px;background:#fff;width:240px;height:47px;line-height:10.45px"><b>en: 1) Initialize;</b><br><span class="dd">----</span><u>clear everything; park locomotives and trains</u><br><b>de: 1) Initialisierung;</b><br><span class="dd">----</span><u>alles zurücksetzen; Loks und Züge parken</u></div>
<div class="ob" style="left:778px;top:153px;width:144px;height:24px"></div>
<div class="tx hd" style="left:779.5px;top:154px"><span class="dd2">----</span> CONSIST</div>
<div class="tx" style="left:778px;top:178px;background:#fff;width:144px;height:22px"><b>en:</b> 2a) start locomotive;<br><b>de:</b> 2a) starte Lok;</div>
<div class="ob" style="left:730px;top:273px;width:144px;height:24px"></div>
<div class="tx hd" style="left:731.5px;top:274px"><span class="dd2">----</span> LINKTRAIN</div>
<div class="ob" style="left:778px;top:345px;width:144px;height:24px"></div>
<div class="tx hd" style="left:779.5px;top:346px"><span class="dd2">----</span> ASSIGNTRAIN</div>
<div class="tx" style="left:778px;top:370px;background:#fff;width:144px;height:22px"><b>en:</b> 2b) start locomotive;<br><b>de:</b> 2b) starte Lok;</div>
<div class="cb " style="left:179px;top:321px;width:48px;height:25px;background:#22f8fc;border:1px solid rgba(30,10,0,0.85);"><span>car001</span></div>
<div class="cb " style="left:226px;top:321px;width:49px;height:25px;background:#22f8fc;border:1px solid rgba(30,10,0,0.85);"><span>car002</span></div>
<div class="cb " style="left:274px;top:321px;width:48px;height:25px;background:#22f8fc;border:1px solid rgba(30,10,0,0.85);"><span>car003</span></div>
<div class="cb " style="left:179px;top:345px;width:143px;height:24px;background:#22f8fc;border:1px solid rgba(30,10,0,0.85);"><span>op_01</span></div>
<div class="cb " style="left:35px;top:345px;width:47px;height:24px;background:#22f8fc;"><span>lc_01</span></div>
<div class="cb " style="left:107px;top:345px;width:47px;height:24px;background:#22f8fc;"><span>lc_02</span></div>
<div class="cb " style="left:35px;top:489px;width:47px;height:23.5px;background:#fc9428;"><span>lc_03</span></div>
<div class="cb " style="left:107px;top:489px;width:47px;height:24px;background:#fc9428;border:1px solid rgba(30,10,0,0.85);"><span>op_03</span></div>
<div class="cb " style="left:107px;top:512px;width:47px;height:24.5px;background:#fc9428;border:1px solid rgba(30,10,0,0.85);"><span>car031</span></div>
<div class="cb reg" style="left:203px;top:489px;width:47px;height:23.5px;background:#fd46fd;"><span>lc_04</span></div>
<div class="cb " style="left:275px;top:489px;width:95px;height:24px;background:#fd46fd;border:1px solid rgba(30,10,0,0.85);"><span>op_04</span></div>
<div class="cb " style="left:275px;top:512px;width:48px;height:24.5px;background:#fd46fd;border:1px solid rgba(30,10,0,0.85);"><span>car041</span></div>
<div class="cb " style="left:322px;top:512px;width:48px;height:24.5px;background:#fd46fd;border:1px solid rgba(30,10,0,0.85);"><span>car042</span></div>
</body></html>
